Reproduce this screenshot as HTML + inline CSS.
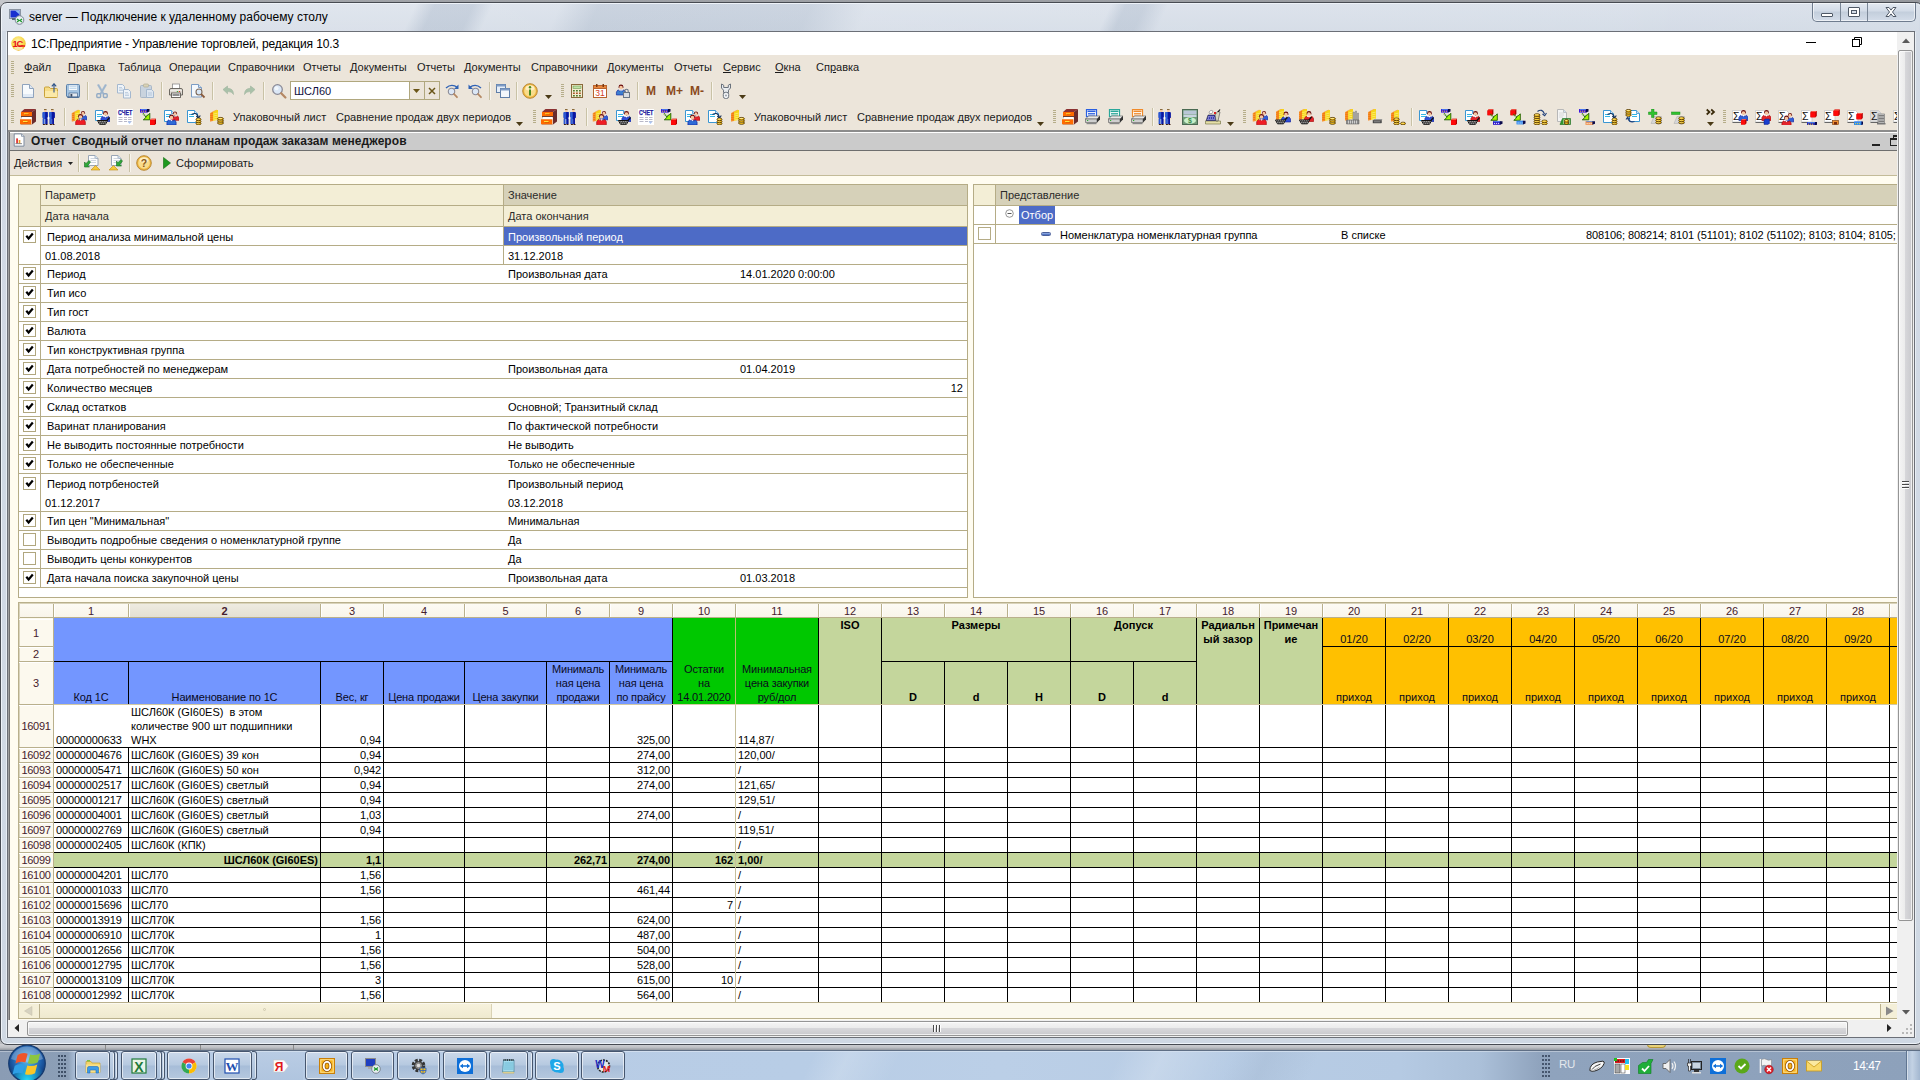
<!DOCTYPE html>
<html lang="ru"><head><meta charset="utf-8"><title>server — Подключение к удаленному рабочему столу</title>
<style>
html,body{margin:0;padding:0;}
body{width:1920px;height:1080px;overflow:hidden;position:relative;background:#b9bbbf;font-family:"Liberation Sans",sans-serif;font-size:11px;color:#000;}
div{position:absolute;box-sizing:border-box;white-space:nowrap;}
svg{position:absolute;overflow:visible;}
.t{line-height:13px;height:13px;}
.m{font-size:11px;line-height:13px;color:#1a1a1a;}
.u{text-decoration:underline;}
.c{text-align:center;}
.r{text-align:right;}
.b{font-weight:bold;}
</style></head>
<body>
<div style="left:0px;top:0px;width:1920px;height:4px;background:linear-gradient(90deg,#c6c8cc 0px,#a2a5aa 160px,#96999e 100%);"></div>
<div style="left:0px;top:2px;width:1923px;height:1043px;background:linear-gradient(180deg,#d9e0ea 0px,#d2dae5 30px,#cfd8e3 100%);border:1px solid #474b52;border-radius:7px 7px 7px 7px;box-shadow:inset 0 0 0 1px #eef3f9;"></div>
<div style="left:1px;top:4px;width:1918px;height:27px;background:linear-gradient(115deg,rgba(255,255,255,.18) 0%,rgba(255,255,255,.18) 21.500%,rgba(120,140,165,.16) 22.500%,rgba(120,140,165,.16) 24.500%,rgba(255,255,255,.15) 25.500%,rgba(255,255,255,.12) 29%,rgba(120,140,165,.15) 31%,rgba(120,140,165,.13) 42%,rgba(255,255,255,.16) 45%,rgba(255,255,255,.14) 57.500%,rgba(120,140,165,.16) 58.300%,rgba(120,140,165,.16) 59.300%,rgba(255,255,255,.1) 60.500%,rgba(255,255,255,.08) 84%,rgba(255,255,255,.04) 87%,rgba(255,255,255,.06) 100%);"></div>
<svg style="left:9px;top:9px" width="16" height="16" viewBox="0 0 16 16"><rect x="0.5" y="0.5" width="11" height="9" fill="#d8dde4" stroke="#8a94a2"/><rect x="1.500" y="1.500" width="9" height="7" fill="#1a2fd0"/><path d="M6 1.500h4.500v4z" fill="#8fb8f0"/><rect x="3" y="9" width="5" height="2" fill="#5a6a80"/><circle cx="10.5" cy="11" r="4.3" fill="#e9eef2" stroke="#7b8794"/><path d="M8 10l2 1.5-2 1.5M13 10l-2 1.5 2 1.5" stroke="#1f9a2e" stroke-width="1.2" fill="none"/></svg>
<div class="t" style="left:29px;top:10px;font-size:12px;line-height:14px;height:14px;">server — Подключение к удаленному рабочему столу</div>
<div style="left:1812px;top:3px;width:104px;height:19px;border:1px solid #6f7c8e;border-top:none;border-radius:0 0 5px 5px;background:linear-gradient(180deg,#e3e9f1,#d2dbe7 45%,#c3cedc 50%,#d4dde9);box-shadow:inset 0 0 0 1px rgba(255,255,255,.6);"></div>
<div style="left:1840px;top:3px;width:1px;height:18px;background:#7a8797;"></div>
<div style="left:1867px;top:3px;width:1px;height:18px;background:#7a8797;"></div>
<div style="left:1821px;top:13px;width:12px;height:4px;background:#fff;border:1px solid #4e5866;border-radius:1px;"></div>
<div style="left:1848px;top:7px;width:12px;height:10px;background:#fff;border:1px solid #4e5866;border-radius:1px;"></div>
<div style="left:1851px;top:10px;width:6px;height:4px;background:#d5dde8;border:1px solid #4e5866;"></div>
<svg style="left:1885px;top:7px" width="12" height="10" viewBox="0 0 12 10"><path d="M1 0.5h3l2 2.6 2-2.6h3l-3.5 4.5 3.5 4.5h-3l-2-2.6-2 2.6h-3l3.5-4.5z" fill="#fff" stroke="#4e5866" stroke-width="1"/></svg>
<div style="left:7px;top:31px;width:1908px;height:1007px;background:#fff;border:1px solid #6b6f77;"></div>
<div style="left:1915px;top:32px;width:1px;height:1006px;background:#e8eef4;"></div>
<div style="left:6px;top:32px;width:1px;height:1006px;background:#e8eef4;"></div>
<div style="left:8px;top:32px;width:1890px;height:23px;background:#fff;"></div>
<div style="left:8px;top:55px;width:1890px;height:965px;background:#ece5da;"></div>
<svg style="left:10.5px;top:35.5px;overflow:hidden" width="15" height="15" viewBox="0 0 16 16"><defs><radialGradient id="g1c" cx="45%" cy="35%" r="70%"><stop offset="0" stop-color="#fff6b0"/><stop offset=".6" stop-color="#f8d84a"/><stop offset="1" stop-color="#eeb020"/></radialGradient></defs><circle cx="8" cy="8" r="7.700" fill="url(#g1c)"/><ellipse cx="8" cy="13" rx="4.500" ry="2" fill="#fff" opacity=".55"/><text x="6.800" y="11.200" font-size="10" font-weight="bold" text-anchor="middle" fill="#e8121a" font-family="Liberation Sans,sans-serif" letter-spacing="-1.2">1С</text><path d="M8 10.700h7" stroke="#e8121a" stroke-width="1.500"/></svg>
<div class="t" style="left:31px;top:37px;font-size:12px;line-height:14px;height:14px;letter-spacing:-.13px;">1С:Предприятие - Управление торговлей, редакция 10.3</div>
<div style="left:1806px;top:42px;width:10px;height:1px;background:#000;"></div>
<svg style="left:1851px;top:36px" width="12" height="12" viewBox="0 0 12 12"><path d="M3.500 3V1.500h7v7H9" fill="none" stroke="#000"/><rect x="1.500" y="3.500" width="7" height="7" fill="#fff" stroke="#000"/></svg>
<div style="left:11px;top:61px;width:3px;height:1px;background:#b5ad8a;"></div><div style="left:11px;top:63px;width:3px;height:1px;background:#b5ad8a;"></div><div style="left:11px;top:65px;width:3px;height:1px;background:#b5ad8a;"></div><div style="left:11px;top:67px;width:3px;height:1px;background:#b5ad8a;"></div><div style="left:11px;top:69px;width:3px;height:1px;background:#b5ad8a;"></div><div style="left:11px;top:71px;width:3px;height:1px;background:#b5ad8a;"></div><div style="left:11px;top:73px;width:3px;height:1px;background:#b5ad8a;"></div>
<div class="t m" style="left:24px;top:61px;"><span class="u">Ф</span>айл</div>
<div class="t m" style="left:68px;top:61px;"><span class="u">П</span>равка</div>
<div class="t m" style="left:118px;top:61px;">Таблица</div>
<div class="t m" style="left:169px;top:61px;">Операции</div>
<div class="t m" style="left:228px;top:61px;">Справочники</div>
<div class="t m" style="left:303px;top:61px;">Отчеты</div>
<div class="t m" style="left:350px;top:61px;">Документы</div>
<div class="t m" style="left:417px;top:61px;">Отчеты</div>
<div class="t m" style="left:464px;top:61px;">Документы</div>
<div class="t m" style="left:531px;top:61px;">Справочники</div>
<div class="t m" style="left:607px;top:61px;">Документы</div>
<div class="t m" style="left:674px;top:61px;">Отчеты</div>
<div class="t m" style="left:723px;top:61px;"><span class="u">С</span>ервис</div>
<div class="t m" style="left:775px;top:61px;"><span class="u">О</span>кна</div>
<div class="t m" style="left:816px;top:61px;">Сп<span class="u">р</span>авка</div>
<div style="left:11px;top:84px;width:3px;height:1px;background:#b5ad8a;"></div><div style="left:11px;top:86px;width:3px;height:1px;background:#b5ad8a;"></div><div style="left:11px;top:88px;width:3px;height:1px;background:#b5ad8a;"></div><div style="left:11px;top:90px;width:3px;height:1px;background:#b5ad8a;"></div><div style="left:11px;top:92px;width:3px;height:1px;background:#b5ad8a;"></div><div style="left:11px;top:94px;width:3px;height:1px;background:#b5ad8a;"></div><div style="left:11px;top:96px;width:3px;height:1px;background:#b5ad8a;"></div>
<svg style="left:20px;top:83px;overflow:hidden" width="16" height="16" viewBox="0 0 16 16"><path d="M2.5 1.5h7l4 4v9h-11z" fill="#f7fafd" stroke="#8fa3bd"/><path d="M9.5 1.5v4h4" fill="#dfe8f3" stroke="#8fa3bd"/><path d="M3 11h10v3h-10z" fill="#dbe6f3" opacity=".8"/></svg>
<svg style="left:43px;top:83px;overflow:hidden" width="16" height="16" viewBox="0 0 16 16"><path d="M1.500 5q0-1 1-1h3.500l1.500 1.500h6q1 0 1 1v7q0 1-1 1h-11q-1 0-1-1z" fill="#f7dc86" stroke="#c9a23a"/><path d="M2 8h12.500v5.500q0 .5-.5.500h-11.500q-.5 0-.5-.5z" fill="#fbe9a8"/><path d="M11 9.500v-8.500M8.800 3.300l2.200-2.600 2.200 2.600" fill="none" stroke="#2f5488" stroke-width="1.100"/></svg>
<svg style="left:65px;top:83px;overflow:hidden" width="16" height="16" viewBox="0 0 16 16"><path d="M1.500 2.500q0-1 1-1h11q1 0 1 1v11q0 1-1 1h-10.500l-1.500-1.500z" fill="#a6c6e4" stroke="#5a7fa8"/><rect x="3.500" y="2" width="9" height="5.500" fill="#f6fafd" stroke="#8fb0d0" stroke-width=".6"/><path d="M4.500 3.700h7M4.500 5.400h7" stroke="#b4d0e8" stroke-width=".9"/><rect x="4" y="10" width="8.500" height="4.500" fill="#e4e9ef" stroke="#4a6a92" stroke-width=".7"/><rect x="5.500" y="11" width="1.800" height="2.800" fill="#3a4a62"/><path d="M2 14h12" stroke="#3f5f88" stroke-width="1"/></svg>
<svg style="left:94px;top:83px;overflow:hidden" width="16" height="16" viewBox="0 0 16 16"><path d="M4 1.500l5.500 9.500M12 1.500l-5.500 9.500" stroke="#a9bdd2" stroke-width="2.300" fill="none"/><path d="M4 1.500l5.500 9.500M12 1.500l-5.500 9.500" stroke="#8fa8c2" stroke-width=".5" fill="none"/><rect x="2.800" y="10.800" width="3.800" height="3.700" rx="1" fill="none" stroke="#93abc5" stroke-width="1.400"/><rect x="9.400" y="10.800" width="3.800" height="3.700" rx="1" fill="none" stroke="#93abc5" stroke-width="1.400"/></svg>
<svg style="left:116px;top:83px;overflow:hidden" width="16" height="16" viewBox="0 0 16 16"><path d="M1.500 1.500h5l2 2v6.500h-7z" fill="#eef3f8" stroke="#a4b8cf"/><path d="M3 4.500h3M3 6h4M3 7.500h4" stroke="#b5c6da" stroke-width=".8"/><path d="M7.500 6.500h5l2 2v6.500h-7z" fill="#eef3f8" stroke="#a4b8cf"/><path d="M9 9.500h3M9 11h4M9 12.500h4" stroke="#b5c6da" stroke-width=".8"/></svg>
<svg style="left:139px;top:83px;overflow:hidden" width="16" height="16" viewBox="0 0 16 16"><rect x="1.500" y="2.500" width="11" height="12" rx="1" fill="#c9d3de" stroke="#a9b7c7"/><rect x="4.500" y="1" width="5" height="3" rx="1" fill="#d9d3b8" stroke="#b3ad92" stroke-width=".7"/><path d="M7.500 6.500h5l2 2v6h-7z" fill="#dde6f0" stroke="#a4b8cf"/><path d="M9 10h4M9 12h4" stroke="#b5c6da"/></svg>
<svg style="left:168px;top:83px;overflow:hidden" width="16" height="16" viewBox="0 0 16 16"><rect x="4.500" y="1" width="7" height="5.500" fill="#fff" stroke="#8a8a8a" stroke-width=".8"/><path d="M1.500 7q0-1.500 1.500-1.500h10q1.500 0 1.500 1.500v5h-13z" fill="#dedad3" stroke="#5f5b55" stroke-width=".9"/><path d="M2 7.300h12" stroke="#f4f2ee" stroke-width=".8"/><rect x="3.500" y="10" width="9" height="4.500" fill="#fbfbfb" stroke="#5f5b55" stroke-width=".9"/><path d="M4.500 12h7" stroke="#3a3a3a" stroke-width="1.100"/><rect x="10.800" y="8" width="1.300" height="1" fill="#e03a1e"/><rect x="8.800" y="8" width="1.300" height="1" fill="#3da53d"/></svg>
<svg style="left:190px;top:83px;overflow:hidden" width="16" height="16" viewBox="0 0 16 16"><path d="M1.500 1.500h7l3 3v9.500h-10z" fill="#f4f8fc" stroke="#7b9cc4"/><path d="M8.500 1.500v3h3" fill="#d6e3f1" stroke="#7b9cc4"/><circle cx="9" cy="9" r="3" fill="#d9e8f7" stroke="#7d6a5a" stroke-width="1.100"/><path d="M11.200 11.200l3.300 3.300" stroke="#8a5a3a" stroke-width="1.800"/></svg>
<svg style="left:220px;top:83px;overflow:hidden" width="16" height="16" viewBox="0 0 16 16"><path d="M3 6.500l4.500-3.500v2.300q6 0 6 6.200-1.500-3.200-6-3v2.300z" fill="#a9c1a9" stroke="#9db49d" stroke-width=".6"/></svg>
<svg style="left:242px;top:83px;overflow:hidden" width="16" height="16" viewBox="0 0 16 16"><path d="M13 6.500l-4.500-3.500v2.300q-6 0-6 6.200 1.500-3.200 6-3v2.300z" fill="#a9c1a9" stroke="#9db49d" stroke-width=".6"/></svg>
<svg style="left:271px;top:83px;overflow:hidden" width="16" height="16" viewBox="0 0 16 16"><circle cx="6.500" cy="6.500" r="4.800" fill="#dbe7f6" stroke="#8a8a96" stroke-width="1.300"/><circle cx="5.500" cy="5.300" r="2" fill="#f4f8fd" opacity=".9"/><path d="M10.200 10.200l4.200 4.300" stroke="#b58863" stroke-width="2.200" stroke-linecap="round"/></svg>
<svg style="left:444px;top:83px;overflow:hidden" width="16" height="16" viewBox="0 0 16 16"><path d="M2 5q5.500-5 11.500-.5" fill="none" stroke="#2f62b5" stroke-width="1.400"/><path d="M14.500 1.500v4.500h-4.500z" fill="#2f62b5"/><circle cx="7.500" cy="8.500" r="3.200" fill="#dbe7f6" stroke="#8a8a96" stroke-width="1.100"/><path d="M10 11l3 3.200" stroke="#b58863" stroke-width="1.800" stroke-linecap="round"/></svg>
<svg style="left:467px;top:83px;overflow:hidden" width="16" height="16" viewBox="0 0 16 16"><path d="M14 5q-5.500-5-11.500-.5" fill="none" stroke="#2f62b5" stroke-width="1.400"/><path d="M1.500 1.500v4.500h4.500z" fill="#2f62b5"/><circle cx="8.500" cy="8.500" r="3.200" fill="#dbe7f6" stroke="#8a8a96" stroke-width="1.100"/><path d="M11 11l3 3.200" stroke="#b58863" stroke-width="1.800" stroke-linecap="round"/></svg>
<svg style="left:495px;top:83px;overflow:hidden" width="16" height="16" viewBox="0 0 16 16"><rect x="1.500" y="1.500" width="9" height="8" fill="#e6eef8" stroke="#5f7ea8"/><rect x="1.500" y="1.500" width="9" height="2" fill="#7f9cc6"/><rect x="5.500" y="5.500" width="9" height="9" fill="#f2f6fb" stroke="#5f7ea8"/><rect x="5.500" y="5.500" width="9" height="2" fill="#7f9cc6"/></svg>
<svg style="left:522px;top:83px;overflow:hidden" width="16" height="16" viewBox="0 0 16 16"><circle cx="8" cy="8" r="7.300" fill="#f0b63c" stroke="#b98a3a"/><circle cx="8" cy="8" r="5.800" fill="#f9dc8b"/><ellipse cx="8" cy="5" rx="4.500" ry="2.800" fill="#fff3cf" opacity=".8"/><rect x="7" y="6.500" width="2" height="6" fill="#4b8a1f"/><circle cx="8" cy="4.300" r="1.200" fill="#4b8a1f"/></svg>
<svg style="left:569px;top:83px;overflow:hidden" width="16" height="16" viewBox="0 0 16 16"><rect x="2.500" y="1.500" width="11" height="13" fill="#f4ecd2" stroke="#8a6a3a"/><rect x="4" y="3" width="8" height="2.500" fill="#bfe3a8" stroke="#5a8a3a" stroke-width=".5"/><rect x="4" y="7.0" width="1.800" height="1.500" fill="#4d7a2a"/><rect x="4" y="9.5" width="1.800" height="1.500" fill="#a8572a"/><rect x="4" y="12.0" width="1.800" height="1.500" fill="#4d7a2a"/><rect x="7" y="7.0" width="1.800" height="1.500" fill="#4d7a2a"/><rect x="7" y="9.5" width="1.800" height="1.500" fill="#a8572a"/><rect x="7" y="12.0" width="1.800" height="1.500" fill="#4d7a2a"/><rect x="10" y="7.0" width="1.800" height="1.500" fill="#4d7a2a"/><rect x="10" y="9.5" width="1.800" height="1.500" fill="#a8572a"/><rect x="10" y="12.0" width="1.800" height="1.500" fill="#4d7a2a"/></svg>
<svg style="left:592px;top:83px;overflow:hidden" width="16" height="16" viewBox="0 0 16 16"><rect x="1.500" y="2.500" width="13" height="12" fill="#fff" stroke="#b8632e"/><rect x="1.500" y="2.500" width="13" height="3" fill="#e8873f" stroke="#b8632e"/><rect x="4" y="1" width="1.500" height="3" fill="#7a3b12"/><rect x="10.500" y="1" width="1.500" height="3" fill="#7a3b12"/><text x="8" y="13.300" font-size="8.500" text-anchor="middle" fill="#d43a1a" font-family="Liberation Sans,sans-serif">31</text></svg>
<svg style="left:615px;top:83px;overflow:hidden" width="16" height="16" viewBox="0 0 16 16"><path d="M1.4000000000000004 12.0v-3.0l1.6-2.2l1.5 1.2l1.5-1.2l1.5 1.2l1.5-1.2l1.6 2.2v3.0z" fill="#3d7fd0" stroke="#0a1a9a" stroke-width=".6"/><path d="M4.8 6.6l1.2 1.6l1.2-1.6z" fill="#fff"/><circle cx="6" cy="4.3" r="2.0" fill="#f7c6a0"/><path d="M3.6 5.0v-1.2a2.4 2.2 0 0 1 4.8 0v1.2l-.8-.3v-1.2q-2.0 -1.500 -3.2 0v1.2z" fill="#6a0c0c"/><rect x="8.500" y="9.500" width="6" height="5" fill="#d9dde3" stroke="#6a7686"/><path d="M9.800 9.500v-1.500a1.700 1.700 0 0 1 3.400 0v1.500" fill="none" stroke="#6a7686" stroke-width="1.100"/></svg>
<svg style="left:718px;top:83px;overflow:hidden" width="16" height="16" viewBox="0 0 16 16"><path d="M3.500 1v4l2 2.200v2.300h5v-2.300l2-2.200v-4l-2.200 1.200v2.300h-4.600v-2.300z" fill="#e9ecef" stroke="#6a727c" stroke-width="1"/><rect x="5.300" y="9.300" width="5.400" height="6.200" rx="2.200" fill="#f2f4f6" stroke="#6a727c"/><circle cx="8" cy="12.500" r="1" fill="#9aa2ac"/></svg>
<div style="left:87px;top:82px;width:1px;height:18px;background:#c9c2a6;"></div><div style="left:88px;top:82px;width:1px;height:18px;background:#f8f5ec;"></div>
<div style="left:161px;top:82px;width:1px;height:18px;background:#c9c2a6;"></div><div style="left:162px;top:82px;width:1px;height:18px;background:#f8f5ec;"></div>
<div style="left:212px;top:82px;width:1px;height:18px;background:#c9c2a6;"></div><div style="left:213px;top:82px;width:1px;height:18px;background:#f8f5ec;"></div>
<div style="left:263px;top:82px;width:1px;height:18px;background:#c9c2a6;"></div><div style="left:264px;top:82px;width:1px;height:18px;background:#f8f5ec;"></div>
<div style="left:489px;top:82px;width:1px;height:18px;background:#c9c2a6;"></div><div style="left:490px;top:82px;width:1px;height:18px;background:#f8f5ec;"></div>
<div style="left:516px;top:82px;width:1px;height:18px;background:#c9c2a6;"></div><div style="left:517px;top:82px;width:1px;height:18px;background:#f8f5ec;"></div>
<div style="left:637px;top:82px;width:1px;height:18px;background:#c9c2a6;"></div><div style="left:638px;top:82px;width:1px;height:18px;background:#f8f5ec;"></div>
<div style="left:711px;top:82px;width:1px;height:18px;background:#c9c2a6;"></div><div style="left:712px;top:82px;width:1px;height:18px;background:#f8f5ec;"></div>
<div style="left:290px;top:81px;width:150px;height:19px;background:#fff;border:1px solid #b0a77e;"></div>
<div style="left:409px;top:82px;width:1px;height:17px;background:#b0a77e;"></div>
<div style="left:424px;top:82px;width:1px;height:17px;background:#b0a77e;"></div>
<div style="left:410px;top:82px;width:14px;height:17px;background:#ece5da;"></div>
<div style="left:425px;top:82px;width:14px;height:17px;background:#ece5da;"></div>
<svg style="left:413px;top:89px" width="7" height="4" viewBox="0 0 7 4"><path d="M0 0h7l-3.500 4z" fill="#6a5518"/></svg>
<svg style="left:428px;top:87px" width="8" height="8" viewBox="0 0 8 8"><path d="M1 1l6 6M7 1l-6 6" stroke="#6a5518" stroke-width="1.500"/></svg>
<div class="t" style="left:294px;top:85px;color:#101040;">ШСЛ60</div>
<svg style="left:545px;top:95px" width="7" height="4" viewBox="0 0 7 4"><path d="M0 0h7l-3.500 4z" fill="#4a3a16"/></svg>
<div style="left:561px;top:84px;width:3px;height:1px;background:#b5ad8a;"></div><div style="left:561px;top:86px;width:3px;height:1px;background:#b5ad8a;"></div><div style="left:561px;top:88px;width:3px;height:1px;background:#b5ad8a;"></div><div style="left:561px;top:90px;width:3px;height:1px;background:#b5ad8a;"></div><div style="left:561px;top:92px;width:3px;height:1px;background:#b5ad8a;"></div><div style="left:561px;top:94px;width:3px;height:1px;background:#b5ad8a;"></div><div style="left:561px;top:96px;width:3px;height:1px;background:#b5ad8a;"></div>
<svg style="left:739px;top:95px" width="7" height="4" viewBox="0 0 7 4"><path d="M0 0h7l-3.500 4z" fill="#4a3a16"/></svg>
<div class="t" style="left:646px;top:84px;font-weight:bold;font-size:12px;line-height:14px;height:14px;color:#8a4a1c;">M</div>
<div class="t" style="left:666px;top:84px;font-weight:bold;font-size:12px;line-height:14px;height:14px;color:#8a4a1c;">M+</div>
<div class="t" style="left:690px;top:84px;font-weight:bold;font-size:12px;line-height:14px;height:14px;color:#8a4a1c;">M-</div>
<div style="left:11px;top:110px;width:3px;height:1px;background:#b5ad8a;"></div><div style="left:11px;top:112px;width:3px;height:1px;background:#b5ad8a;"></div><div style="left:11px;top:114px;width:3px;height:1px;background:#b5ad8a;"></div><div style="left:11px;top:116px;width:3px;height:1px;background:#b5ad8a;"></div><div style="left:11px;top:118px;width:3px;height:1px;background:#b5ad8a;"></div><div style="left:11px;top:120px;width:3px;height:1px;background:#b5ad8a;"></div><div style="left:11px;top:122px;width:3px;height:1px;background:#b5ad8a;"></div>
<svg style="left:20px;top:109px;overflow:hidden" width="16" height="16" viewBox="0 0 16 16"><path d="M1 3l3.500-3h11.500l-4 3z" fill="#8c3030"/><path d="M12 3l4-3v12.500l-4 3z" fill="#6a2c2c"/><rect x="1" y="3" width="11" height="4.200" fill="#ff6a00"/><rect x="1" y="7.200" width="11" height="1" fill="#4a1a10"/><rect x="2" y="8" width="9.500" height="2.200" fill="#fff"/><rect x="0" y="10.300" width="11.300" height="4.700" fill="#ff6a00"/><path d="M0 15h11.300l.7.500h-11z" fill="#b84a00"/><rect x="4" y="4.300" width="4.500" height="1.100" fill="#ffe23a"/><rect x="4.500" y="5.400" width="4.500" height=".5" fill="#c04a00"/><rect x="3" y="12" width="4.500" height="1.100" fill="#ffe23a"/><rect x="3.500" y="13.100" width="4.500" height=".5" fill="#c04a00"/></svg>
<svg style="left:42px;top:109px;overflow:hidden" width="16" height="16" viewBox="0 0 16 16"><path d="M2 0h2.600v1.200h-2.600z" fill="#8a6a3a"/><rect x="2.2" y="1" width="2.300" height="1.900" fill="#f7c6a0"/><path d="M0.3 4q0-1 1-1h3.600q1 0 1 1v5h-.9v6h-1.900v-5h-.6v5h-1.900v-6h-.300z" fill="#2a55d0"/><path d="M3.2 3h2.400v12h-1.900v-5h-.500z" fill="#0a16a0"/><rect x="0.9" y="15" width="2" height="1" fill="#3a1a10"/><rect x="3.5" y="15" width="2" height="1" fill="#3a1a10"/><rect x="-0.1" y="8.800" width=".9" height="1" fill="#f7c6a0"/><path d="M9 0h2.600v1.200h-2.600z" fill="#8a6a3a"/><rect x="9.2" y="1" width="2.300" height="1.900" fill="#f7c6a0"/><path d="M7.3 4q0-1 1-1h3.600q1 0 1 1v5h-.9v6h-1.900v-5h-.6v5h-1.900v-6h-.300z" fill="#0a16a0"/><path d="M7.3 3h2.400v12h-1.900v-5h-.500z" fill="#2f60d8"/><rect x="7.9" y="15" width="2" height="1" fill="#3a1a10"/><rect x="10.5" y="15" width="2" height="1" fill="#3a1a10"/><rect x="12.5" y="8.800" width=".9" height="1" fill="#f7c6a0"/><path d="M6.500 7l.6 1.400 1.400.6-1.400.6-.6 1.400-.6-1.400-1.400-.6 1.400-.6z" fill="#fff"/></svg>
<div style="left:64px;top:108px;width:1px;height:18px;background:#c9c2a6;"></div><div style="left:65px;top:108px;width:1px;height:18px;background:#f8f5ec;"></div>
<svg style="left:71px;top:109px;overflow:hidden" width="16" height="16" viewBox="0 0 16 16"><path d="M0.8 4.5l3-1.800v9.300l-3 .5z" fill="#f27a10"/><path d="M3.8 2.7l3.500-1.700h1.500v9.800l-5 1.200z" fill="#f6d516"/><path d="M0.8 4.5l3-1.800 3.500-1.700" fill="none" stroke="#f9a030" stroke-width=".6"/><path d="M1.1 5.8l2.500-.5" stroke="#ffc070" stroke-width=".7" stroke-dasharray=".8 .6"/><path d="M4.1 5.1l4.400-1" stroke="#fff7a0" stroke-width=".6"/><path d="M1.1 7.8l2.500-.5" stroke="#ffc070" stroke-width=".7" stroke-dasharray=".8 .6"/><path d="M4.1 7.1l4.400-1" stroke="#fff7a0" stroke-width=".6"/><path d="M1.1 9.8l2.500-.5" stroke="#ffc070" stroke-width=".7" stroke-dasharray=".8 .6"/><path d="M4.1 9.100000000000001l4.400-1" stroke="#fff7a0" stroke-width=".6"/><path d="M1.1 11.8l2.500-.5" stroke="#ffc070" stroke-width=".7" stroke-dasharray=".8 .6"/><path d="M4.1 11.100000000000001l4.400-1" stroke="#fff7a0" stroke-width=".6"/><path d="M8.09 10.85v-2.55l1.36-1.87l1.275 1.02l1.275-1.02l1.275 1.02l1.275-1.02l1.36 1.87v2.55z" fill="#2f5fd8" stroke="#0a1a9a" stroke-width=".6"/><path d="M10.98 6.26l1.02 1.36l1.02-1.36z" fill="#fff"/><circle cx="12" cy="4.305" r="1.7" fill="#f7c6a0"/><path d="M9.9 4.9v-1.02a2.1 1.9 0 0 1 4.2 0v1.02l-.8-.3v-1.02q-1.7 -1.500 -2.5999999999999996 0v1.02z" fill="#6a0c0c"/><path d="M4.67 15.850000000000001v-3.1500000000000004l1.6800000000000002-2.3100000000000005l1.5750000000000002 1.26l1.5750000000000002-1.26l1.5750000000000002 1.26l1.5750000000000002-1.26l1.6800000000000002 2.3100000000000005v3.1500000000000004z" fill="#f01c24" stroke="#a00000" stroke-width=".6"/><path d="M8.24 10.18l1.26 1.6800000000000002l1.26-1.6800000000000002z" fill="#fff"/><circle cx="9.5" cy="7.765" r="2.1" fill="#f7c6a0"/><path d="M7.0 8.5v-1.26a2.5 2.3000000000000003 0 0 1 5.0 0v1.26l-.8-.3v-1.26q-2.1 -1.500 -3.4000000000000004 0v1.26z" fill="#6a0c0c"/></svg>
<svg style="left:94px;top:109px;overflow:hidden" width="16" height="16" viewBox="0 0 16 16"><path d="M1.5 1.5h7l3 3v7h-10z" fill="#fff" stroke="#3a96d2" stroke-width="1"/><path d="M8.5 1.5v3h3" fill="#cfe1f5" stroke="#3a96d2" stroke-width=".8"/><rect x="3" y="5" width="5" height="1" fill="#35b6e6"/><rect x="3" y="7" width="5" height="1" fill="#35b6e6"/><path d="M6.9 12.5v-3.0l1.6-2.2l1.5 1.2l1.5-1.2l1.5 1.2l1.5-1.2l1.6 2.2v3.0z" fill="#2f4fd6" stroke="#0a1a9a" stroke-width=".6"/><path d="M10.3 7.1l1.2 1.6l1.2-1.6z" fill="#fff"/><circle cx="11.5" cy="4.8" r="2.0" fill="#f7c6a0"/><path d="M9.1 5.5v-1.2a2.4 2.2 0 0 1 4.8 0v1.2l-.8-.3v-1.2q-2.0 -1.500 -3.2 0v1.2z" fill="#6a0c0c"/><path d="M3.5 11.5h10l-2 3.800h-6z" fill="#f4f4f4" stroke="#111" stroke-width="1"/><path d="M5.5 11.5l1.300 3.800M7.5 11.5l.7 3.800M9.5 11.5l-.7 3.800M11.5 11.5l-1.300 3.800M4.3 13.2h8.4" stroke="#111" stroke-width=".7"/><path d="M13.0 11.5l2.500-3" stroke="#111" stroke-width="1.300"/></svg>
<svg style="left:117px;top:109px;overflow:hidden" width="16" height="16" viewBox="0 0 16 16"><rect x="0" y="0" width="16" height="16" fill="#fff"/><text x="1" y="5.600" font-size="6.800" font-weight="bold" fill="#1c1ca0" stroke="#1c1ca0" stroke-width=".25" font-family="Liberation Sans,sans-serif" textLength="14.200" lengthAdjust="spacingAndGlyphs">СЧЕТ</text><rect x="1.5" y="8" width="4" height="1" fill="#b8b8c8"/><rect x="1.5" y="10" width="4" height="1" fill="#b8b8c8"/><rect x="1.5" y="12" width="4" height="1" fill="#b8b8c8"/><rect x="7" y="8" width="3" height="1" fill="#b8b8c8"/><rect x="7" y="10" width="3" height="1" fill="#b8b8c8"/><rect x="7" y="12" width="3" height="1" fill="#b8b8c8"/><rect x="11" y="8" width="3.5" height="1" fill="#b8b8c8"/><rect x="11" y="10" width="3.5" height="1" fill="#b8b8c8"/><rect x="11" y="12" width="3.5" height="1" fill="#b8b8c8"/><path d="M10.500 12.500h4l-2 2.500z" fill="#a9c4f2"/></svg>
<svg style="left:140px;top:109px;overflow:hidden" width="16" height="16" viewBox="0 0 16 16"><rect x="0" y="0" width="7.5" height="3.600" fill="#3a12e0"/><rect x="0.8" y="0" width="6.7" height=".9" fill="#4a8af0" opacity=".9"/><path d="M6.9 0h2.600v2.600l-2.600 1z" fill="#0a0a4a"/><rect x="1.1" y="1.7" width="1" height="1" fill="#ffe020"/><rect x="3.1" y="1.7" width="1" height="1" fill="#ffe020"/><rect x="5.1" y="1.7" width="1" height="1" fill="#ffe020"/><path d="M3 4.5l3.200 3.600" stroke="#2a7a00" stroke-width="1.500" stroke-dasharray="1 .7"/><path d="M9.8 4.3v6.500h-6.500l2.300-2 1.200-2.300 1.500-.600z" fill="#a6f500" stroke="#1c5a00" stroke-width=".9" stroke-linejoin="round"/><path d="M10 11.100000000000001l1.300-1.300h4.8v4.8l-1.300 1.300h-4.8z" fill="#b00000"/><path d="M10 11.100000000000001l1.300-1.300h4.8l-1.300 1.300z" fill="#ff5a4a"/><rect x="10" y="11.100000000000001" width="4.8" height="4.8" fill="#ff0a0a"/></svg>
<svg style="left:163px;top:109px;overflow:hidden" width="16" height="16" viewBox="0 0 16 16"><path d="M1.5 1.5h7l3 3v8h-10z" fill="#fff" stroke="#3a96d2" stroke-width="1"/><path d="M8.5 1.5v3h3" fill="#cfe1f5" stroke="#3a96d2" stroke-width=".8"/><rect x="3" y="5" width="5" height="1" fill="#35b6e6"/><rect x="3" y="7" width="5" height="1" fill="#35b6e6"/><path d="M8.09 11.35v-2.55l1.36-1.87l1.275 1.02l1.275-1.02l1.275 1.02l1.275-1.02l1.36 1.87v2.55z" fill="#e3242b" stroke="#a00000" stroke-width=".6"/><path d="M10.98 6.76l1.02 1.36l1.02-1.36z" fill="#fff"/><circle cx="12" cy="4.805" r="1.7" fill="#f7c6a0"/><path d="M9.9 5.4v-1.02a2.1 1.9 0 0 1 4.2 0v1.02l-.8-.3v-1.02q-1.7 -1.500 -2.5999999999999996 0v1.02z" fill="#6a0c0c"/><path d="M3.9000000000000004 16.0v-3.0l1.6-2.2l1.5 1.2l1.5-1.2l1.5 1.2l1.5-1.2l1.6 2.2v3.0z" fill="#2f6bd6" stroke="#0a1a9a" stroke-width=".6"/><path d="M7.3 10.6l1.2 1.6l1.2-1.6z" fill="#fff"/><circle cx="8.5" cy="8.3" r="2.0" fill="#f7c6a0"/><path d="M6.1 9.0v-1.2a2.4 2.2 0 0 1 4.8 0v1.2l-.8-.3v-1.2q-2.0 -1.500 -3.2 0v1.2z" fill="#6a0c0c"/></svg>
<svg style="left:186px;top:109px;overflow:hidden" width="16" height="16" viewBox="0 0 16 16"><path d="M1.5 1.5h7l3 3v9h-10z" fill="#fff" stroke="#3a96d2" stroke-width="1"/><path d="M8.5 1.5v3h3" fill="#cfe1f5" stroke="#3a96d2" stroke-width=".8"/><rect x="3" y="5" width="5" height="1" fill="#35b6e6"/><rect x="3" y="7" width="5" height="1" fill="#35b6e6"/><path d="M5.500 5.500q5.500-3 7 3" fill="none" stroke="#14305a" stroke-width="1.100"/><path d="M10.300 7l2.200 2.200 1.800-2.700" fill="none" stroke="#14305a" stroke-width="1.100"/><ellipse cx="12.5" cy="14.6" rx="2.5" ry="1.350" fill="#f2b705" stroke="#4a3000" stroke-width=".8"/><path d="M11.0 14.299999999999999h2.5" stroke="#fff3a8" stroke-width=".8"/><ellipse cx="12.5" cy="12.5" rx="2.5" ry="1.350" fill="#f2b705" stroke="#4a3000" stroke-width=".8"/><path d="M11.0 12.2h2.5" stroke="#fff3a8" stroke-width=".8"/><ellipse cx="12.5" cy="10.399999999999999" rx="2.5" ry="1.350" fill="#f2b705" stroke="#4a3000" stroke-width=".8"/><path d="M11.0 10.099999999999998h2.5" stroke="#fff3a8" stroke-width=".8"/></svg>
<svg style="left:209px;top:109px;overflow:hidden" width="16" height="16" viewBox="0 0 16 16"><path d="M1 4.5l3-1.800v9.300l-3 .5z" fill="#f27a10"/><path d="M4 2.7l3.500-1.700h1.500v9.800l-5 1.200z" fill="#f6d516"/><path d="M1 4.5l3-1.800 3.500-1.700" fill="none" stroke="#f9a030" stroke-width=".6"/><path d="M1.3 5.8l2.500-.5" stroke="#ffc070" stroke-width=".7" stroke-dasharray=".8 .6"/><path d="M4.3 5.1l4.400-1" stroke="#fff7a0" stroke-width=".6"/><path d="M1.3 7.8l2.500-.5" stroke="#ffc070" stroke-width=".7" stroke-dasharray=".8 .6"/><path d="M4.3 7.1l4.400-1" stroke="#fff7a0" stroke-width=".6"/><path d="M1.3 9.8l2.500-.5" stroke="#ffc070" stroke-width=".7" stroke-dasharray=".8 .6"/><path d="M4.3 9.100000000000001l4.400-1" stroke="#fff7a0" stroke-width=".6"/><path d="M1.3 11.8l2.500-.5" stroke="#ffc070" stroke-width=".7" stroke-dasharray=".8 .6"/><path d="M4.3 11.100000000000001l4.400-1" stroke="#fff7a0" stroke-width=".6"/><ellipse cx="11.5" cy="14.0" rx="3.0" ry="1.350" fill="#f2b705" stroke="#4a3000" stroke-width=".8"/><path d="M9.5 13.7h3.5" stroke="#fff3a8" stroke-width=".8"/><ellipse cx="11.5" cy="11.9" rx="3.0" ry="1.350" fill="#f2b705" stroke="#4a3000" stroke-width=".8"/><path d="M9.5 11.6h3.5" stroke="#fff3a8" stroke-width=".8"/><ellipse cx="11.5" cy="9.8" rx="3.0" ry="1.350" fill="#f2b705" stroke="#4a3000" stroke-width=".8"/><path d="M9.5 9.5h3.5" stroke="#fff3a8" stroke-width=".8"/></svg>
<div class="t" style="left:233px;top:111px;color:#1a1a1a;">Упаковочный лист</div>
<div class="t" style="left:336px;top:111px;color:#1a1a1a;">Сравнение продаж двух периодов</div>
<svg style="left:516px;top:122px" width="7" height="4" viewBox="0 0 7 4"><path d="M0 0h7l-3.500 4z" fill="#4a3a16"/></svg>
<div style="left:533px;top:110px;width:3px;height:1px;background:#b5ad8a;"></div><div style="left:533px;top:112px;width:3px;height:1px;background:#b5ad8a;"></div><div style="left:533px;top:114px;width:3px;height:1px;background:#b5ad8a;"></div><div style="left:533px;top:116px;width:3px;height:1px;background:#b5ad8a;"></div><div style="left:533px;top:118px;width:3px;height:1px;background:#b5ad8a;"></div><div style="left:533px;top:120px;width:3px;height:1px;background:#b5ad8a;"></div><div style="left:533px;top:122px;width:3px;height:1px;background:#b5ad8a;"></div>
<svg style="left:541px;top:109px;overflow:hidden" width="16" height="16" viewBox="0 0 16 16"><path d="M1 3l3.500-3h11.500l-4 3z" fill="#8c3030"/><path d="M12 3l4-3v12.500l-4 3z" fill="#6a2c2c"/><rect x="1" y="3" width="11" height="4.200" fill="#ff6a00"/><rect x="1" y="7.200" width="11" height="1" fill="#4a1a10"/><rect x="2" y="8" width="9.500" height="2.200" fill="#fff"/><rect x="0" y="10.300" width="11.300" height="4.700" fill="#ff6a00"/><path d="M0 15h11.300l.7.500h-11z" fill="#b84a00"/><rect x="4" y="4.300" width="4.500" height="1.100" fill="#ffe23a"/><rect x="4.500" y="5.400" width="4.500" height=".5" fill="#c04a00"/><rect x="3" y="12" width="4.500" height="1.100" fill="#ffe23a"/><rect x="3.500" y="13.100" width="4.500" height=".5" fill="#c04a00"/></svg>
<svg style="left:563px;top:109px;overflow:hidden" width="16" height="16" viewBox="0 0 16 16"><path d="M2 0h2.600v1.200h-2.600z" fill="#8a6a3a"/><rect x="2.2" y="1" width="2.300" height="1.900" fill="#f7c6a0"/><path d="M0.3 4q0-1 1-1h3.600q1 0 1 1v5h-.9v6h-1.900v-5h-.6v5h-1.900v-6h-.300z" fill="#2a55d0"/><path d="M3.2 3h2.400v12h-1.900v-5h-.500z" fill="#0a16a0"/><rect x="0.9" y="15" width="2" height="1" fill="#3a1a10"/><rect x="3.5" y="15" width="2" height="1" fill="#3a1a10"/><rect x="-0.1" y="8.800" width=".9" height="1" fill="#f7c6a0"/><path d="M9 0h2.600v1.200h-2.600z" fill="#8a6a3a"/><rect x="9.2" y="1" width="2.300" height="1.900" fill="#f7c6a0"/><path d="M7.3 4q0-1 1-1h3.600q1 0 1 1v5h-.9v6h-1.900v-5h-.6v5h-1.900v-6h-.300z" fill="#0a16a0"/><path d="M7.3 3h2.400v12h-1.900v-5h-.500z" fill="#2f60d8"/><rect x="7.9" y="15" width="2" height="1" fill="#3a1a10"/><rect x="10.5" y="15" width="2" height="1" fill="#3a1a10"/><rect x="12.5" y="8.800" width=".9" height="1" fill="#f7c6a0"/><path d="M6.500 7l.6 1.400 1.400.6-1.400.6-.6 1.400-.6-1.400-1.400-.6 1.400-.6z" fill="#fff"/></svg>
<div style="left:586px;top:108px;width:1px;height:18px;background:#c9c2a6;"></div><div style="left:587px;top:108px;width:1px;height:18px;background:#f8f5ec;"></div>
<svg style="left:592px;top:109px;overflow:hidden" width="16" height="16" viewBox="0 0 16 16"><path d="M0.8 4.5l3-1.800v9.300l-3 .5z" fill="#f27a10"/><path d="M3.8 2.7l3.500-1.700h1.500v9.800l-5 1.200z" fill="#f6d516"/><path d="M0.8 4.5l3-1.800 3.500-1.700" fill="none" stroke="#f9a030" stroke-width=".6"/><path d="M1.1 5.8l2.500-.5" stroke="#ffc070" stroke-width=".7" stroke-dasharray=".8 .6"/><path d="M4.1 5.1l4.400-1" stroke="#fff7a0" stroke-width=".6"/><path d="M1.1 7.8l2.500-.5" stroke="#ffc070" stroke-width=".7" stroke-dasharray=".8 .6"/><path d="M4.1 7.1l4.400-1" stroke="#fff7a0" stroke-width=".6"/><path d="M1.1 9.8l2.500-.5" stroke="#ffc070" stroke-width=".7" stroke-dasharray=".8 .6"/><path d="M4.1 9.100000000000001l4.400-1" stroke="#fff7a0" stroke-width=".6"/><path d="M1.1 11.8l2.500-.5" stroke="#ffc070" stroke-width=".7" stroke-dasharray=".8 .6"/><path d="M4.1 11.100000000000001l4.400-1" stroke="#fff7a0" stroke-width=".6"/><path d="M8.09 10.85v-2.55l1.36-1.87l1.275 1.02l1.275-1.02l1.275 1.02l1.275-1.02l1.36 1.87v2.55z" fill="#2f5fd8" stroke="#0a1a9a" stroke-width=".6"/><path d="M10.98 6.26l1.02 1.36l1.02-1.36z" fill="#fff"/><circle cx="12" cy="4.305" r="1.7" fill="#f7c6a0"/><path d="M9.9 4.9v-1.02a2.1 1.9 0 0 1 4.2 0v1.02l-.8-.3v-1.02q-1.7 -1.500 -2.5999999999999996 0v1.02z" fill="#6a0c0c"/><path d="M4.67 15.850000000000001v-3.1500000000000004l1.6800000000000002-2.3100000000000005l1.5750000000000002 1.26l1.5750000000000002-1.26l1.5750000000000002 1.26l1.5750000000000002-1.26l1.6800000000000002 2.3100000000000005v3.1500000000000004z" fill="#f01c24" stroke="#a00000" stroke-width=".6"/><path d="M8.24 10.18l1.26 1.6800000000000002l1.26-1.6800000000000002z" fill="#fff"/><circle cx="9.5" cy="7.765" r="2.1" fill="#f7c6a0"/><path d="M7.0 8.5v-1.26a2.5 2.3000000000000003 0 0 1 5.0 0v1.26l-.8-.3v-1.26q-2.1 -1.500 -3.4000000000000004 0v1.26z" fill="#6a0c0c"/></svg>
<svg style="left:615px;top:109px;overflow:hidden" width="16" height="16" viewBox="0 0 16 16"><path d="M1.5 1.5h7l3 3v7h-10z" fill="#fff" stroke="#3a96d2" stroke-width="1"/><path d="M8.5 1.5v3h3" fill="#cfe1f5" stroke="#3a96d2" stroke-width=".8"/><rect x="3" y="5" width="5" height="1" fill="#35b6e6"/><rect x="3" y="7" width="5" height="1" fill="#35b6e6"/><path d="M6.9 12.5v-3.0l1.6-2.2l1.5 1.2l1.5-1.2l1.5 1.2l1.5-1.2l1.6 2.2v3.0z" fill="#2f4fd6" stroke="#0a1a9a" stroke-width=".6"/><path d="M10.3 7.1l1.2 1.6l1.2-1.6z" fill="#fff"/><circle cx="11.5" cy="4.8" r="2.0" fill="#f7c6a0"/><path d="M9.1 5.5v-1.2a2.4 2.2 0 0 1 4.8 0v1.2l-.8-.3v-1.2q-2.0 -1.500 -3.2 0v1.2z" fill="#6a0c0c"/><path d="M3.5 11.5h10l-2 3.800h-6z" fill="#f4f4f4" stroke="#111" stroke-width="1"/><path d="M5.5 11.5l1.300 3.800M7.5 11.5l.7 3.800M9.5 11.5l-.7 3.800M11.5 11.5l-1.300 3.800M4.3 13.2h8.4" stroke="#111" stroke-width=".7"/><path d="M13.0 11.5l2.500-3" stroke="#111" stroke-width="1.300"/></svg>
<svg style="left:638px;top:109px;overflow:hidden" width="16" height="16" viewBox="0 0 16 16"><rect x="0" y="0" width="16" height="16" fill="#fff"/><text x="1" y="5.600" font-size="6.800" font-weight="bold" fill="#1c1ca0" stroke="#1c1ca0" stroke-width=".25" font-family="Liberation Sans,sans-serif" textLength="14.200" lengthAdjust="spacingAndGlyphs">СЧЕТ</text><rect x="1.5" y="8" width="4" height="1" fill="#b8b8c8"/><rect x="1.5" y="10" width="4" height="1" fill="#b8b8c8"/><rect x="1.5" y="12" width="4" height="1" fill="#b8b8c8"/><rect x="7" y="8" width="3" height="1" fill="#b8b8c8"/><rect x="7" y="10" width="3" height="1" fill="#b8b8c8"/><rect x="7" y="12" width="3" height="1" fill="#b8b8c8"/><rect x="11" y="8" width="3.5" height="1" fill="#b8b8c8"/><rect x="11" y="10" width="3.5" height="1" fill="#b8b8c8"/><rect x="11" y="12" width="3.5" height="1" fill="#b8b8c8"/><path d="M10.500 12.500h4l-2 2.500z" fill="#a9c4f2"/></svg>
<svg style="left:661px;top:109px;overflow:hidden" width="16" height="16" viewBox="0 0 16 16"><rect x="0" y="0" width="7.5" height="3.600" fill="#3a12e0"/><rect x="0.8" y="0" width="6.7" height=".9" fill="#4a8af0" opacity=".9"/><path d="M6.9 0h2.600v2.600l-2.600 1z" fill="#0a0a4a"/><rect x="1.1" y="1.7" width="1" height="1" fill="#ffe020"/><rect x="3.1" y="1.7" width="1" height="1" fill="#ffe020"/><rect x="5.1" y="1.7" width="1" height="1" fill="#ffe020"/><path d="M3 4.5l3.200 3.600" stroke="#2a7a00" stroke-width="1.500" stroke-dasharray="1 .7"/><path d="M9.8 4.3v6.500h-6.500l2.300-2 1.200-2.300 1.500-.600z" fill="#a6f500" stroke="#1c5a00" stroke-width=".9" stroke-linejoin="round"/><path d="M10 11.100000000000001l1.300-1.300h4.8v4.8l-1.300 1.300h-4.8z" fill="#b00000"/><path d="M10 11.100000000000001l1.300-1.300h4.8l-1.300 1.300z" fill="#ff5a4a"/><rect x="10" y="11.100000000000001" width="4.8" height="4.8" fill="#ff0a0a"/></svg>
<svg style="left:684px;top:109px;overflow:hidden" width="16" height="16" viewBox="0 0 16 16"><path d="M1.5 1.5h7l3 3v8h-10z" fill="#fff" stroke="#3a96d2" stroke-width="1"/><path d="M8.5 1.5v3h3" fill="#cfe1f5" stroke="#3a96d2" stroke-width=".8"/><rect x="3" y="5" width="5" height="1" fill="#35b6e6"/><rect x="3" y="7" width="5" height="1" fill="#35b6e6"/><path d="M8.09 11.35v-2.55l1.36-1.87l1.275 1.02l1.275-1.02l1.275 1.02l1.275-1.02l1.36 1.87v2.55z" fill="#e3242b" stroke="#a00000" stroke-width=".6"/><path d="M10.98 6.76l1.02 1.36l1.02-1.36z" fill="#fff"/><circle cx="12" cy="4.805" r="1.7" fill="#f7c6a0"/><path d="M9.9 5.4v-1.02a2.1 1.9 0 0 1 4.2 0v1.02l-.8-.3v-1.02q-1.7 -1.500 -2.5999999999999996 0v1.02z" fill="#6a0c0c"/><path d="M3.9000000000000004 16.0v-3.0l1.6-2.2l1.5 1.2l1.5-1.2l1.5 1.2l1.5-1.2l1.6 2.2v3.0z" fill="#2f6bd6" stroke="#0a1a9a" stroke-width=".6"/><path d="M7.3 10.6l1.2 1.6l1.2-1.6z" fill="#fff"/><circle cx="8.5" cy="8.3" r="2.0" fill="#f7c6a0"/><path d="M6.1 9.0v-1.2a2.4 2.2 0 0 1 4.8 0v1.2l-.8-.3v-1.2q-2.0 -1.500 -3.2 0v1.2z" fill="#6a0c0c"/></svg>
<svg style="left:707px;top:109px;overflow:hidden" width="16" height="16" viewBox="0 0 16 16"><path d="M1.5 1.5h7l3 3v9h-10z" fill="#fff" stroke="#3a96d2" stroke-width="1"/><path d="M8.5 1.5v3h3" fill="#cfe1f5" stroke="#3a96d2" stroke-width=".8"/><rect x="3" y="5" width="5" height="1" fill="#35b6e6"/><rect x="3" y="7" width="5" height="1" fill="#35b6e6"/><path d="M5.500 5.500q5.500-3 7 3" fill="none" stroke="#14305a" stroke-width="1.100"/><path d="M10.300 7l2.200 2.200 1.800-2.700" fill="none" stroke="#14305a" stroke-width="1.100"/><ellipse cx="12.5" cy="14.6" rx="2.5" ry="1.350" fill="#f2b705" stroke="#4a3000" stroke-width=".8"/><path d="M11.0 14.299999999999999h2.5" stroke="#fff3a8" stroke-width=".8"/><ellipse cx="12.5" cy="12.5" rx="2.5" ry="1.350" fill="#f2b705" stroke="#4a3000" stroke-width=".8"/><path d="M11.0 12.2h2.5" stroke="#fff3a8" stroke-width=".8"/><ellipse cx="12.5" cy="10.399999999999999" rx="2.5" ry="1.350" fill="#f2b705" stroke="#4a3000" stroke-width=".8"/><path d="M11.0 10.099999999999998h2.5" stroke="#fff3a8" stroke-width=".8"/></svg>
<svg style="left:730px;top:109px;overflow:hidden" width="16" height="16" viewBox="0 0 16 16"><path d="M1 4.5l3-1.800v9.300l-3 .5z" fill="#f27a10"/><path d="M4 2.7l3.500-1.700h1.500v9.800l-5 1.200z" fill="#f6d516"/><path d="M1 4.5l3-1.800 3.500-1.700" fill="none" stroke="#f9a030" stroke-width=".6"/><path d="M1.3 5.8l2.500-.5" stroke="#ffc070" stroke-width=".7" stroke-dasharray=".8 .6"/><path d="M4.3 5.1l4.400-1" stroke="#fff7a0" stroke-width=".6"/><path d="M1.3 7.8l2.500-.5" stroke="#ffc070" stroke-width=".7" stroke-dasharray=".8 .6"/><path d="M4.3 7.1l4.400-1" stroke="#fff7a0" stroke-width=".6"/><path d="M1.3 9.8l2.500-.5" stroke="#ffc070" stroke-width=".7" stroke-dasharray=".8 .6"/><path d="M4.3 9.100000000000001l4.400-1" stroke="#fff7a0" stroke-width=".6"/><path d="M1.3 11.8l2.500-.5" stroke="#ffc070" stroke-width=".7" stroke-dasharray=".8 .6"/><path d="M4.3 11.100000000000001l4.400-1" stroke="#fff7a0" stroke-width=".6"/><ellipse cx="11.5" cy="14.0" rx="3.0" ry="1.350" fill="#f2b705" stroke="#4a3000" stroke-width=".8"/><path d="M9.5 13.7h3.5" stroke="#fff3a8" stroke-width=".8"/><ellipse cx="11.5" cy="11.9" rx="3.0" ry="1.350" fill="#f2b705" stroke="#4a3000" stroke-width=".8"/><path d="M9.5 11.6h3.5" stroke="#fff3a8" stroke-width=".8"/><ellipse cx="11.5" cy="9.8" rx="3.0" ry="1.350" fill="#f2b705" stroke="#4a3000" stroke-width=".8"/><path d="M9.5 9.5h3.5" stroke="#fff3a8" stroke-width=".8"/></svg>
<div class="t" style="left:754px;top:111px;color:#1a1a1a;">Упаковочный лист</div>
<div class="t" style="left:857px;top:111px;color:#1a1a1a;">Сравнение продаж двух периодов</div>
<svg style="left:1037px;top:122px" width="7" height="4" viewBox="0 0 7 4"><path d="M0 0h7l-3.500 4z" fill="#4a3a16"/></svg>
<div style="left:1053px;top:110px;width:3px;height:1px;background:#b5ad8a;"></div><div style="left:1053px;top:112px;width:3px;height:1px;background:#b5ad8a;"></div><div style="left:1053px;top:114px;width:3px;height:1px;background:#b5ad8a;"></div><div style="left:1053px;top:116px;width:3px;height:1px;background:#b5ad8a;"></div><div style="left:1053px;top:118px;width:3px;height:1px;background:#b5ad8a;"></div><div style="left:1053px;top:120px;width:3px;height:1px;background:#b5ad8a;"></div><div style="left:1053px;top:122px;width:3px;height:1px;background:#b5ad8a;"></div>
<svg style="left:1062px;top:109px;overflow:hidden" width="16" height="16" viewBox="0 0 16 16"><path d="M1 3l3.500-3h11.500l-4 3z" fill="#8c3030"/><path d="M12 3l4-3v12.500l-4 3z" fill="#6a2c2c"/><rect x="1" y="3" width="11" height="4.200" fill="#ff6a00"/><rect x="1" y="7.200" width="11" height="1" fill="#4a1a10"/><rect x="2" y="8" width="9.500" height="2.200" fill="#fff"/><rect x="0" y="10.300" width="11.300" height="4.700" fill="#ff6a00"/><path d="M0 15h11.300l.7.500h-11z" fill="#b84a00"/><rect x="4" y="4.300" width="4.500" height="1.100" fill="#ffe23a"/><rect x="4.500" y="5.400" width="4.500" height=".5" fill="#c04a00"/><rect x="3" y="12" width="4.500" height="1.100" fill="#ffe23a"/><rect x="3.500" y="13.100" width="4.500" height=".5" fill="#c04a00"/></svg>
<svg style="left:1085px;top:109px;overflow:hidden" width="16" height="16" viewBox="0 0 16 16"><rect x="1.500" y="0.500" width="10" height="7" fill="#fff" stroke="#2a5fe0" stroke-width="1.200"/><rect x="2.500" y="1.500" width="8" height="1.600" fill="#2a5fe0"/><path d="M3 4.500h7M3 6h7" stroke="#2a5fe0" stroke-width=".9"/><path d="M0.500 10l3-3h11.500l-3 3z" fill="#e8e8e8" stroke="#555" stroke-width=".6"/><path d="M0.500 10h11.500v3.500h-11.500z" fill="#cfcfcf" stroke="#555" stroke-width=".6"/><path d="M12 10l3-3v3.500l-3 3z" fill="#333"/><rect x="1.500" y="14" width="10" height="1.200" fill="#888"/><rect x="2" y="11" width="1.200" height="1" fill="#2fae2f"/></svg>
<svg style="left:1108px;top:109px;overflow:hidden" width="16" height="16" viewBox="0 0 16 16"><rect x="1.500" y="0.500" width="10" height="7" fill="#fff" stroke="#2aa79a" stroke-width="1.200"/><rect x="2.500" y="1.500" width="8" height="1.600" fill="#2aa79a"/><path d="M3 4.500h7M3 6h7" stroke="#2aa79a" stroke-width=".9"/><path d="M0.500 10l3-3h11.500l-3 3z" fill="#e8e8e8" stroke="#555" stroke-width=".6"/><path d="M0.500 10h11.500v3.500h-11.500z" fill="#cfcfcf" stroke="#555" stroke-width=".6"/><path d="M12 10l3-3v3.500l-3 3z" fill="#333"/><rect x="1.500" y="14" width="10" height="1.200" fill="#888"/><rect x="2" y="11" width="1.200" height="1" fill="#2fae2f"/></svg>
<svg style="left:1131px;top:109px;overflow:hidden" width="16" height="16" viewBox="0 0 16 16"><rect x="1.500" y="0.500" width="10" height="7" fill="#fff" stroke="#f08a2a" stroke-width="1.200"/><rect x="2.500" y="1.500" width="8" height="1.600" fill="#f08a2a"/><path d="M3 4.500h7M3 6h7" stroke="#f08a2a" stroke-width=".9"/><path d="M0.500 10l3-3h11.500l-3 3z" fill="#e8e8e8" stroke="#555" stroke-width=".6"/><path d="M0.500 10h11.500v3.500h-11.500z" fill="#cfcfcf" stroke="#555" stroke-width=".6"/><path d="M12 10l3-3v3.500l-3 3z" fill="#333"/><rect x="1.500" y="14" width="10" height="1.200" fill="#888"/><rect x="2" y="11" width="1.200" height="1" fill="#2fae2f"/></svg>
<div style="left:1152px;top:108px;width:1px;height:18px;background:#c9c2a6;"></div><div style="left:1153px;top:108px;width:1px;height:18px;background:#f8f5ec;"></div>
<svg style="left:1158px;top:109px;overflow:hidden" width="16" height="16" viewBox="0 0 16 16"><path d="M2 0h2.600v1.200h-2.600z" fill="#8a6a3a"/><rect x="2.2" y="1" width="2.300" height="1.900" fill="#f7c6a0"/><path d="M0.3 4q0-1 1-1h3.600q1 0 1 1v5h-.9v6h-1.900v-5h-.6v5h-1.900v-6h-.300z" fill="#2a55d0"/><path d="M3.2 3h2.400v12h-1.900v-5h-.500z" fill="#0a16a0"/><rect x="0.9" y="15" width="2" height="1" fill="#3a1a10"/><rect x="3.5" y="15" width="2" height="1" fill="#3a1a10"/><rect x="-0.1" y="8.800" width=".9" height="1" fill="#f7c6a0"/><path d="M9 0h2.600v1.200h-2.600z" fill="#8a6a3a"/><rect x="9.2" y="1" width="2.300" height="1.900" fill="#f7c6a0"/><path d="M7.3 4q0-1 1-1h3.600q1 0 1 1v5h-.9v6h-1.900v-5h-.6v5h-1.900v-6h-.300z" fill="#0a16a0"/><path d="M7.3 3h2.400v12h-1.900v-5h-.500z" fill="#2f60d8"/><rect x="7.9" y="15" width="2" height="1" fill="#3a1a10"/><rect x="10.5" y="15" width="2" height="1" fill="#3a1a10"/><rect x="12.5" y="8.800" width=".9" height="1" fill="#f7c6a0"/><path d="M6.500 7l.6 1.400 1.400.6-1.400.6-.6 1.400-.6-1.400-1.400-.6 1.400-.6z" fill="#fff"/></svg>
<svg style="left:1182px;top:109px;overflow:hidden" width="16" height="16" viewBox="0 0 16 16"><rect x="0.500" y="0.500" width="15" height="15" fill="#6f9a78" stroke="#4a6a52"/><rect x="1.500" y="1.500" width="13" height="3.500" fill="#b9c6d6"/><rect x="1.500" y="5.500" width="13" height="2.500" fill="#c9d3e0"/><ellipse cx="8" cy="11.500" rx="6" ry="3.300" fill="#c9f0c9"/><text x="8" y="14.300" font-size="7" font-weight="bold" text-anchor="middle" fill="#3c8a4a" font-family="Liberation Sans,sans-serif">$</text></svg>
<svg style="left:1205px;top:109px;overflow:hidden" width="16" height="16" viewBox="0 0 16 16"><path d="M1 12l2-6h7l3 6z" fill="#3a3ab0" stroke="#222" stroke-width=".5"/><path d="M3.500 7.500h6M3 9h7M2.500 10.500h8" stroke="#dfe3f5" stroke-width=".8" stroke-dasharray="1 1"/><path d="M0.500 12h15v3h-15z" fill="#e6dfa8" stroke="#6a6a3a" stroke-width=".6"/><path d="M10 6l3-4 2 1-2 9h-2z" fill="#d8d8c0" stroke="#444" stroke-width=".6"/><path d="M4 3q2-3 4-1l-1 2.500h-2.500z" fill="#fff" stroke="#666" stroke-width=".5"/><rect x="9" y="3" width="2" height="2" fill="#d22"/><path d="M13 3l2-2.500" stroke="#111" stroke-width="1.200"/></svg>
<svg style="left:1227px;top:122px" width="7" height="4" viewBox="0 0 7 4"><path d="M0 0h7l-3.500 4z" fill="#4a3a16"/></svg>
<div style="left:1243px;top:110px;width:3px;height:1px;background:#b5ad8a;"></div><div style="left:1243px;top:112px;width:3px;height:1px;background:#b5ad8a;"></div><div style="left:1243px;top:114px;width:3px;height:1px;background:#b5ad8a;"></div><div style="left:1243px;top:116px;width:3px;height:1px;background:#b5ad8a;"></div><div style="left:1243px;top:118px;width:3px;height:1px;background:#b5ad8a;"></div><div style="left:1243px;top:120px;width:3px;height:1px;background:#b5ad8a;"></div><div style="left:1243px;top:122px;width:3px;height:1px;background:#b5ad8a;"></div>
<svg style="left:1252px;top:109px;overflow:hidden" width="16" height="16" viewBox="0 0 16 16"><path d="M0.8 4.5l3-1.800v9.300l-3 .5z" fill="#f27a10"/><path d="M3.8 2.7l3.500-1.700h1.500v9.800l-5 1.200z" fill="#f6d516"/><path d="M0.8 4.5l3-1.800 3.500-1.700" fill="none" stroke="#f9a030" stroke-width=".6"/><path d="M1.1 5.8l2.500-.5" stroke="#ffc070" stroke-width=".7" stroke-dasharray=".8 .6"/><path d="M4.1 5.1l4.400-1" stroke="#fff7a0" stroke-width=".6"/><path d="M1.1 7.8l2.500-.5" stroke="#ffc070" stroke-width=".7" stroke-dasharray=".8 .6"/><path d="M4.1 7.1l4.400-1" stroke="#fff7a0" stroke-width=".6"/><path d="M1.1 9.8l2.500-.5" stroke="#ffc070" stroke-width=".7" stroke-dasharray=".8 .6"/><path d="M4.1 9.100000000000001l4.400-1" stroke="#fff7a0" stroke-width=".6"/><path d="M1.1 11.8l2.500-.5" stroke="#ffc070" stroke-width=".7" stroke-dasharray=".8 .6"/><path d="M4.1 11.100000000000001l4.400-1" stroke="#fff7a0" stroke-width=".6"/><path d="M8.09 10.85v-2.55l1.36-1.87l1.275 1.02l1.275-1.02l1.275 1.02l1.275-1.02l1.36 1.87v2.55z" fill="#2f5fd8" stroke="#0a1a9a" stroke-width=".6"/><path d="M10.98 6.26l1.02 1.36l1.02-1.36z" fill="#fff"/><circle cx="12" cy="4.305" r="1.7" fill="#f7c6a0"/><path d="M9.9 4.9v-1.02a2.1 1.9 0 0 1 4.2 0v1.02l-.8-.3v-1.02q-1.7 -1.500 -2.5999999999999996 0v1.02z" fill="#6a0c0c"/><path d="M4.67 15.850000000000001v-3.1500000000000004l1.6800000000000002-2.3100000000000005l1.5750000000000002 1.26l1.5750000000000002-1.26l1.5750000000000002 1.26l1.5750000000000002-1.26l1.6800000000000002 2.3100000000000005v3.1500000000000004z" fill="#f01c24" stroke="#a00000" stroke-width=".6"/><path d="M8.24 10.18l1.26 1.6800000000000002l1.26-1.6800000000000002z" fill="#fff"/><circle cx="9.5" cy="7.765" r="2.1" fill="#f7c6a0"/><path d="M7.0 8.5v-1.26a2.5 2.3000000000000003 0 0 1 5.0 0v1.26l-.8-.3v-1.26q-2.1 -1.500 -3.4000000000000004 0v1.26z" fill="#6a0c0c"/></svg>
<svg style="left:1275px;top:109px;overflow:hidden" width="16" height="16" viewBox="0 0 16 16"><path d="M1 3.0l3-1.800v9.300l-3 .5z" fill="#f27a10"/><path d="M4 1.2l3.500-1.700h1.500v9.800l-5 1.200z" fill="#f6d516"/><path d="M1 3.0l3-1.800 3.500-1.700" fill="none" stroke="#f9a030" stroke-width=".6"/><path d="M1.3 4.3l2.500-.5" stroke="#ffc070" stroke-width=".7" stroke-dasharray=".8 .6"/><path d="M4.3 3.5999999999999996l4.400-1" stroke="#fff7a0" stroke-width=".6"/><path d="M1.3 6.3l2.500-.5" stroke="#ffc070" stroke-width=".7" stroke-dasharray=".8 .6"/><path d="M4.3 5.6l4.400-1" stroke="#fff7a0" stroke-width=".6"/><path d="M1.3 8.3l2.500-.5" stroke="#ffc070" stroke-width=".7" stroke-dasharray=".8 .6"/><path d="M4.3 7.6000000000000005l4.400-1" stroke="#fff7a0" stroke-width=".6"/><path d="M1.3 10.3l2.500-.5" stroke="#ffc070" stroke-width=".7" stroke-dasharray=".8 .6"/><path d="M4.3 9.600000000000001l4.400-1" stroke="#fff7a0" stroke-width=".6"/><path d="M6.4 13.0v-3.0l1.6-2.2l1.5 1.2l1.5-1.2l1.5 1.2l1.5-1.2l1.6 2.2v3.0z" fill="#2f4fd6" stroke="#0a1a9a" stroke-width=".6"/><path d="M9.8 7.6l1.2 1.6l1.2-1.6z" fill="#fff"/><circle cx="11" cy="5.3" r="2.0" fill="#f7c6a0"/><path d="M8.6 6.0v-1.2a2.4 2.2 0 0 1 4.8 0v1.2l-.8-.3v-1.2q-2.0 -1.500 -3.2 0v1.2z" fill="#6a0c0c"/><path d="M0.5 11h10l-2 3.800h-6z" fill="#f4f4f4" stroke="#111" stroke-width="1"/><path d="M2.5 11l1.300 3.800M4.5 11l.7 3.800M6.5 11l-.7 3.800M8.5 11l-1.300 3.800M1.3 12.7h8.4" stroke="#111" stroke-width=".7"/><path d="M10.0 11l2.500-3" stroke="#111" stroke-width="1.300"/></svg>
<svg style="left:1298px;top:109px;overflow:hidden" width="16" height="16" viewBox="0 0 16 16"><path d="M1 3.0l3-1.800v9.300l-3 .5z" fill="#f27a10"/><path d="M4 1.2l3.500-1.700h1.500v9.800l-5 1.200z" fill="#f6d516"/><path d="M1 3.0l3-1.800 3.500-1.700" fill="none" stroke="#f9a030" stroke-width=".6"/><path d="M1.3 4.3l2.500-.5" stroke="#ffc070" stroke-width=".7" stroke-dasharray=".8 .6"/><path d="M4.3 3.5999999999999996l4.400-1" stroke="#fff7a0" stroke-width=".6"/><path d="M1.3 6.3l2.500-.5" stroke="#ffc070" stroke-width=".7" stroke-dasharray=".8 .6"/><path d="M4.3 5.6l4.400-1" stroke="#fff7a0" stroke-width=".6"/><path d="M1.3 8.3l2.500-.5" stroke="#ffc070" stroke-width=".7" stroke-dasharray=".8 .6"/><path d="M4.3 7.6000000000000005l4.400-1" stroke="#fff7a0" stroke-width=".6"/><path d="M1.3 10.3l2.500-.5" stroke="#ffc070" stroke-width=".7" stroke-dasharray=".8 .6"/><path d="M4.3 9.600000000000001l4.400-1" stroke="#fff7a0" stroke-width=".6"/><path d="M6.4 12.5v-3.0l1.6-2.2l1.5 1.2l1.5-1.2l1.5 1.2l1.5-1.2l1.6 2.2v3.0z" fill="#e3242b" stroke="#a00000" stroke-width=".6"/><path d="M9.8 7.1l1.2 1.6l1.2-1.6z" fill="#fff"/><circle cx="11" cy="4.8" r="2.0" fill="#f7c6a0"/><path d="M8.6 5.5v-1.2a2.4 2.2 0 0 1 4.8 0v1.2l-.8-.3v-1.2q-2.0 -1.500 -3.2 0v1.2z" fill="#6a0c0c"/><path d="M1.5 11h10l-2 3.800h-6z" fill="#f4f4f4" stroke="#111" stroke-width="1"/><path d="M3.5 11l1.300 3.800M5.5 11l.7 3.800M7.5 11l-.7 3.800M9.5 11l-1.300 3.800M2.3 12.7h8.4" stroke="#111" stroke-width=".7"/><path d="M11.0 11l2.500-3" stroke="#111" stroke-width="1.300"/></svg>
<svg style="left:1321px;top:109px;overflow:hidden" width="16" height="16" viewBox="0 0 16 16"><path d="M1 4.5l3-1.800v9.300l-3 .5z" fill="#f27a10"/><path d="M4 2.7l3.500-1.700h1.500v9.800l-5 1.200z" fill="#f6d516"/><path d="M1 4.5l3-1.800 3.500-1.700" fill="none" stroke="#f9a030" stroke-width=".6"/><path d="M1.3 5.8l2.500-.5" stroke="#ffc070" stroke-width=".7" stroke-dasharray=".8 .6"/><path d="M4.3 5.1l4.400-1" stroke="#fff7a0" stroke-width=".6"/><path d="M1.3 7.8l2.500-.5" stroke="#ffc070" stroke-width=".7" stroke-dasharray=".8 .6"/><path d="M4.3 7.1l4.400-1" stroke="#fff7a0" stroke-width=".6"/><path d="M1.3 9.8l2.500-.5" stroke="#ffc070" stroke-width=".7" stroke-dasharray=".8 .6"/><path d="M4.3 9.100000000000001l4.400-1" stroke="#fff7a0" stroke-width=".6"/><path d="M1.3 11.8l2.500-.5" stroke="#ffc070" stroke-width=".7" stroke-dasharray=".8 .6"/><path d="M4.3 11.100000000000001l4.400-1" stroke="#fff7a0" stroke-width=".6"/><ellipse cx="11.5" cy="14.0" rx="3.0" ry="1.350" fill="#f2b705" stroke="#4a3000" stroke-width=".8"/><path d="M9.5 13.7h3.5" stroke="#fff3a8" stroke-width=".8"/><ellipse cx="11.5" cy="11.9" rx="3.0" ry="1.350" fill="#f2b705" stroke="#4a3000" stroke-width=".8"/><path d="M9.5 11.6h3.5" stroke="#fff3a8" stroke-width=".8"/><ellipse cx="11.5" cy="9.8" rx="3.0" ry="1.350" fill="#f2b705" stroke="#4a3000" stroke-width=".8"/><path d="M9.5 9.5h3.5" stroke="#fff3a8" stroke-width=".8"/></svg>
<svg style="left:1344px;top:109px;overflow:hidden" width="16" height="16" viewBox="0 0 16 16"><path d="M1 3.5l3-1.800v9.300l-3 .5z" fill="#f27a10"/><path d="M4 1.7l3.500-1.700h1.500v9.800l-5 1.200z" fill="#f6d516"/><path d="M1 3.5l3-1.800 3.500-1.700" fill="none" stroke="#f9a030" stroke-width=".6"/><path d="M1.3 4.8l2.500-.5" stroke="#ffc070" stroke-width=".7" stroke-dasharray=".8 .6"/><path d="M4.3 4.1l4.400-1" stroke="#fff7a0" stroke-width=".6"/><path d="M1.3 6.8l2.500-.5" stroke="#ffc070" stroke-width=".7" stroke-dasharray=".8 .6"/><path d="M4.3 6.1l4.400-1" stroke="#fff7a0" stroke-width=".6"/><path d="M1.3 8.8l2.500-.5" stroke="#ffc070" stroke-width=".7" stroke-dasharray=".8 .6"/><path d="M4.3 8.100000000000001l4.400-1" stroke="#fff7a0" stroke-width=".6"/><path d="M1.3 10.8l2.500-.5" stroke="#ffc070" stroke-width=".7" stroke-dasharray=".8 .6"/><path d="M4.3 10.100000000000001l4.400-1" stroke="#fff7a0" stroke-width=".6"/><path d="M9 3h1.500v8h-1.500zM11.500 2l1 0v9h-1zM13.500 4h1v7h-1z" fill="#b0b0b0" stroke="#666" stroke-width=".4"/><path d="M2.500 11h12.500v4h-12.500z" fill="#8a8a8a" stroke="#555" stroke-width=".5"/><path d="M4.500 11.500v3M6.500 11.500v3M8.500 11.500v3M10.500 11.500v3M12.500 11.500v3" stroke="#e0e0e0" stroke-width=".8"/></svg>
<svg style="left:1367px;top:109px;overflow:hidden" width="16" height="16" viewBox="0 0 16 16"><path d="M1 3.5l3-1.800v9.300l-3 .5z" fill="#f27a10"/><path d="M4 1.7l3.500-1.700h1.500v9.800l-5 1.200z" fill="#f6d516"/><path d="M1 3.5l3-1.800 3.500-1.700" fill="none" stroke="#f9a030" stroke-width=".6"/><path d="M1.3 4.8l2.500-.5" stroke="#ffc070" stroke-width=".7" stroke-dasharray=".8 .6"/><path d="M4.3 4.1l4.400-1" stroke="#fff7a0" stroke-width=".6"/><path d="M1.3 6.8l2.500-.5" stroke="#ffc070" stroke-width=".7" stroke-dasharray=".8 .6"/><path d="M4.3 6.1l4.400-1" stroke="#fff7a0" stroke-width=".6"/><path d="M1.3 8.8l2.500-.5" stroke="#ffc070" stroke-width=".7" stroke-dasharray=".8 .6"/><path d="M4.3 8.100000000000001l4.400-1" stroke="#fff7a0" stroke-width=".6"/><path d="M1.3 10.8l2.500-.5" stroke="#ffc070" stroke-width=".7" stroke-dasharray=".8 .6"/><path d="M4.3 10.100000000000001l4.400-1" stroke="#fff7a0" stroke-width=".6"/><path d="M6 11.500l1-1.500h8.500l-1 1.500z" fill="#999"/><rect x="6" y="11.500" width="8.500" height="2.500" fill="#555" stroke="#333" stroke-width=".4"/><circle cx="8" cy="12.800" r=".5" fill="#ddd"/><circle cx="10" cy="12.800" r=".5" fill="#ddd"/><circle cx="12" cy="12.800" r=".5" fill="#ddd"/></svg>
<svg style="left:1390px;top:109px;overflow:hidden" width="16" height="16" viewBox="0 0 16 16"><path d="M1 4.5l3-1.800v9.300l-3 .5z" fill="#f27a10"/><path d="M4 2.7l3.500-1.700h1.500v9.800l-5 1.200z" fill="#f6d516"/><path d="M1 4.5l3-1.800 3.500-1.700" fill="none" stroke="#f9a030" stroke-width=".6"/><path d="M1.3 5.8l2.500-.5" stroke="#ffc070" stroke-width=".7" stroke-dasharray=".8 .6"/><path d="M4.3 5.1l4.400-1" stroke="#fff7a0" stroke-width=".6"/><path d="M1.3 7.8l2.500-.5" stroke="#ffc070" stroke-width=".7" stroke-dasharray=".8 .6"/><path d="M4.3 7.1l4.400-1" stroke="#fff7a0" stroke-width=".6"/><path d="M1.3 9.8l2.500-.5" stroke="#ffc070" stroke-width=".7" stroke-dasharray=".8 .6"/><path d="M4.3 9.100000000000001l4.400-1" stroke="#fff7a0" stroke-width=".6"/><path d="M1.3 11.8l2.500-.5" stroke="#ffc070" stroke-width=".7" stroke-dasharray=".8 .6"/><path d="M4.3 11.100000000000001l4.400-1" stroke="#fff7a0" stroke-width=".6"/><ellipse cx="6.5" cy="14.5" rx="2.75" ry="1.350" fill="#f2b705" stroke="#4a3000" stroke-width=".8"/><path d="M4.75 14.2h3.0" stroke="#fff3a8" stroke-width=".8"/><ellipse cx="6.5" cy="12.4" rx="2.75" ry="1.350" fill="#f2b705" stroke="#4a3000" stroke-width=".8"/><path d="M4.75 12.1h3.0" stroke="#fff3a8" stroke-width=".8"/><ellipse cx="6.5" cy="10.3" rx="2.75" ry="1.350" fill="#f2b705" stroke="#4a3000" stroke-width=".8"/><path d="M4.75 10.0h3.0" stroke="#fff3a8" stroke-width=".8"/><ellipse cx="13" cy="14.5" rx="2.5" ry="1.350" fill="#f2b705" stroke="#4a3000" stroke-width=".8"/><path d="M11.5 14.2h2.5" stroke="#fff3a8" stroke-width=".8"/></svg>
<div style="left:1411px;top:108px;width:1px;height:18px;background:#c9c2a6;"></div><div style="left:1412px;top:108px;width:1px;height:18px;background:#f8f5ec;"></div>
<svg style="left:1418px;top:109px;overflow:hidden" width="16" height="16" viewBox="0 0 16 16"><path d="M1.5 1.5h7l3 3v7h-10z" fill="#fff" stroke="#3a96d2" stroke-width="1"/><path d="M8.5 1.5v3h3" fill="#cfe1f5" stroke="#3a96d2" stroke-width=".8"/><rect x="3" y="5" width="5" height="1" fill="#35b6e6"/><rect x="3" y="7" width="5" height="1" fill="#35b6e6"/><path d="M6.9 12.5v-3.0l1.6-2.2l1.5 1.2l1.5-1.2l1.5 1.2l1.5-1.2l1.6 2.2v3.0z" fill="#2f4fd6" stroke="#0a1a9a" stroke-width=".6"/><path d="M10.3 7.1l1.2 1.6l1.2-1.6z" fill="#fff"/><circle cx="11.5" cy="4.8" r="2.0" fill="#f7c6a0"/><path d="M9.1 5.5v-1.2a2.4 2.2 0 0 1 4.8 0v1.2l-.8-.3v-1.2q-2.0 -1.500 -3.2 0v1.2z" fill="#6a0c0c"/><path d="M3.5 11.5h10l-2 3.800h-6z" fill="#f4f4f4" stroke="#111" stroke-width="1"/><path d="M5.5 11.5l1.300 3.800M7.5 11.5l.7 3.800M9.5 11.5l-.7 3.800M11.5 11.5l-1.300 3.800M4.3 13.2h8.4" stroke="#111" stroke-width=".7"/><path d="M13.0 11.5l2.500-3" stroke="#111" stroke-width="1.300"/></svg>
<svg style="left:1441px;top:109px;overflow:hidden" width="16" height="16" viewBox="0 0 16 16"><rect x="0" y="0" width="7.5" height="3.600" fill="#3a12e0"/><rect x="0.8" y="0" width="6.7" height=".9" fill="#4a8af0" opacity=".9"/><path d="M6.9 0h2.600v2.600l-2.600 1z" fill="#0a0a4a"/><rect x="1.1" y="1.7" width="1" height="1" fill="#ffe020"/><rect x="3.1" y="1.7" width="1" height="1" fill="#ffe020"/><rect x="5.1" y="1.7" width="1" height="1" fill="#ffe020"/><path d="M3 4.5l3.200 3.600" stroke="#2a7a00" stroke-width="1.500" stroke-dasharray="1 .7"/><path d="M9.8 4.3v6.500h-6.500l2.300-2 1.200-2.300 1.500-.600z" fill="#a6f500" stroke="#1c5a00" stroke-width=".9" stroke-linejoin="round"/><path d="M10 11.100000000000001l1.300-1.300h4.8v4.8l-1.300 1.300h-4.8z" fill="#b00000"/><path d="M10 11.100000000000001l1.300-1.300h4.8l-1.300 1.300z" fill="#ff5a4a"/><rect x="10" y="11.100000000000001" width="4.8" height="4.8" fill="#ff0a0a"/></svg>
<svg style="left:1464px;top:109px;overflow:hidden" width="16" height="16" viewBox="0 0 16 16"><path d="M1.5 1.5h7l3 3v7h-10z" fill="#fff" stroke="#3a96d2" stroke-width="1"/><path d="M8.5 1.5v3h3" fill="#cfe1f5" stroke="#3a96d2" stroke-width=".8"/><rect x="3" y="5" width="5" height="1" fill="#35b6e6"/><rect x="3" y="7" width="5" height="1" fill="#35b6e6"/><path d="M6.9 12.5v-3.0l1.6-2.2l1.5 1.2l1.5-1.2l1.5 1.2l1.5-1.2l1.6 2.2v3.0z" fill="#e3242b" stroke="#a00000" stroke-width=".6"/><path d="M10.3 7.1l1.2 1.6l1.2-1.6z" fill="#fff"/><circle cx="11.5" cy="4.8" r="2.0" fill="#f7c6a0"/><path d="M9.1 5.5v-1.2a2.4 2.2 0 0 1 4.8 0v1.2l-.8-.3v-1.2q-2.0 -1.500 -3.2 0v1.2z" fill="#6a0c0c"/><path d="M3.5 11.5h10l-2 3.800h-6z" fill="#f4f4f4" stroke="#111" stroke-width="1"/><path d="M5.5 11.5l1.300 3.800M7.5 11.5l.7 3.800M9.5 11.5l-.7 3.800M11.5 11.5l-1.300 3.800M4.3 13.2h8.4" stroke="#111" stroke-width=".7"/><path d="M13.0 11.5l2.500-3" stroke="#111" stroke-width="1.300"/></svg>
<svg style="left:1487px;top:109px;overflow:hidden" width="16" height="16" viewBox="0 0 16 16"><path d="M0.5 1.6l1.300-1.300h4.6v4.6l-1.300 1.300h-4.6z" fill="#b00000"/><path d="M0.5 1.6l1.300-1.300h4.6l-1.300 1.300z" fill="#ff5a4a"/><rect x="0.5" y="1.6" width="4.6" height="4.6" fill="#ff0a0a"/><path d="M3.5 5l3.200 3.600" stroke="#2a7a00" stroke-width="1.500" stroke-dasharray="1 .7"/><path d="M10.3 4.8v6.500h-6.500l2.300-2 1.200-2.300 1.500-.600z" fill="#a6f500" stroke="#1c5a00" stroke-width=".9" stroke-linejoin="round"/><rect x="6" y="12.2" width="7.5" height="3.600" fill="#2a12c8"/><rect x="6.8" y="12.2" width="6.7" height=".9" fill="#4a8af0" opacity=".9"/><path d="M12.9 12.2h2.600v2.600l-2.600 1z" fill="#0a0a4a"/><rect x="7.1" y="13.899999999999999" width="1" height="1" fill="#fff"/><rect x="9.1" y="13.899999999999999" width="1" height="1" fill="#fff"/><rect x="11.1" y="13.899999999999999" width="1" height="1" fill="#fff"/></svg>
<svg style="left:1510px;top:109px;overflow:hidden" width="16" height="16" viewBox="0 0 16 16"><path d="M0.5 1.6l1.300-1.300h4.6v4.6l-1.300 1.300h-4.6z" fill="#b00000"/><path d="M0.5 1.6l1.300-1.300h4.6l-1.300 1.300z" fill="#ff5a4a"/><rect x="0.5" y="1.6" width="4.6" height="4.6" fill="#ff0a0a"/><path d="M3.5 5l3.200 3.600" stroke="#2a7a00" stroke-width="1.500" stroke-dasharray="1 .7"/><path d="M10.3 4.8v6.500h-6.500l2.300-2 1.200-2.300 1.500-.600z" fill="#a6f500" stroke="#1c5a00" stroke-width=".9" stroke-linejoin="round"/><rect x="6.5" y="11.8" width="7" height="3.600" fill="#2f8af0"/><rect x="7.3" y="11.8" width="6.2" height=".9" fill="#4a8af0" opacity=".9"/><path d="M12.9 11.8h2.600v2.600l-2.600 1z" fill="#0a0a4a"/><rect x="7.6" y="13.5" width="1" height="1" fill="#fff"/><rect x="9.6" y="13.5" width="1" height="1" fill="#fff"/><rect x="11.6" y="13.5" width="1" height="1" fill="#fff"/></svg>
<svg style="left:1533px;top:109px;overflow:hidden" width="16" height="16" viewBox="0 0 16 16"><ellipse cx="4" cy="14.5" rx="3.0" ry="1.350" fill="#f2b705" stroke="#4a3000" stroke-width=".8"/><path d="M2.0 14.2h3.5" stroke="#fff3a8" stroke-width=".8"/><ellipse cx="4" cy="12.4" rx="3.0" ry="1.350" fill="#f2b705" stroke="#4a3000" stroke-width=".8"/><path d="M2.0 12.1h3.5" stroke="#fff3a8" stroke-width=".8"/><ellipse cx="4" cy="10.3" rx="3.0" ry="1.350" fill="#f2b705" stroke="#4a3000" stroke-width=".8"/><path d="M2.0 10.0h3.5" stroke="#fff3a8" stroke-width=".8"/><ellipse cx="4" cy="8.2" rx="3.0" ry="1.350" fill="#f2b705" stroke="#4a3000" stroke-width=".8"/><path d="M2.0 7.8999999999999995h3.5" stroke="#fff3a8" stroke-width=".8"/><ellipse cx="4" cy="6.1" rx="3.0" ry="1.350" fill="#f2b705" stroke="#4a3000" stroke-width=".8"/><path d="M2.0 5.8h3.5" stroke="#fff3a8" stroke-width=".8"/><ellipse cx="11.5" cy="14.5" rx="2.75" ry="1.350" fill="#f2b705" stroke="#4a3000" stroke-width=".8"/><path d="M9.75 14.2h3.0" stroke="#fff3a8" stroke-width=".8"/><ellipse cx="11.5" cy="12.4" rx="2.75" ry="1.350" fill="#f2b705" stroke="#4a3000" stroke-width=".8"/><path d="M9.75 12.1h3.0" stroke="#fff3a8" stroke-width=".8"/><path d="M4.500 2.500q4.500-3.500 7 2.500" fill="none" stroke="#1f3f7a" stroke-width="1.100"/><path d="M9.500 5l2.200 1.800 1.800-2.800" fill="none" stroke="#1f3f7a" stroke-width="1.100"/></svg>
<svg style="left:1556px;top:109px;overflow:hidden" width="16" height="16" viewBox="0 0 16 16"><path d="M1.5 0.5h6l3 3v9h-9z" fill="#f4f4f4" stroke="#b8b8b8" stroke-width="1"/><path d="M7.5 0.5v3h3" fill="#cfe1f5" stroke="#b8b8b8" stroke-width=".8"/><path d="M3 4h5M3 6h5M3 8h4" stroke="#d0d0d0" stroke-width=".8"/><path d="M4 15.500l2.500-6h8v6z" fill="#2f9a2f" stroke="#1c6a1c" stroke-width=".6"/><rect x="7.500" y="10.500" width="6" height="4.500" fill="#f4f0d8"/><ellipse cx="10.5" cy="14.0" rx="2.25" ry="1.350" fill="#f2b705" stroke="#4a3000" stroke-width=".8"/><path d="M9.25 13.7h2.0" stroke="#fff3a8" stroke-width=".8"/><ellipse cx="10.5" cy="11.9" rx="2.25" ry="1.350" fill="#f2b705" stroke="#4a3000" stroke-width=".8"/><path d="M9.25 11.6h2.0" stroke="#fff3a8" stroke-width=".8"/></svg>
<svg style="left:1579px;top:109px;overflow:hidden" width="16" height="16" viewBox="0 0 16 16"><rect x="0" y="0" width="7.5" height="3.600" fill="#3a12e0"/><rect x="0.8" y="0" width="6.7" height=".9" fill="#4a8af0" opacity=".9"/><path d="M6.9 0h2.600v2.600l-2.600 1z" fill="#0a0a4a"/><rect x="1.1" y="1.7" width="1" height="1" fill="#ffe020"/><rect x="3.1" y="1.7" width="1" height="1" fill="#ffe020"/><rect x="5.1" y="1.7" width="1" height="1" fill="#ffe020"/><path d="M3 4.5l3.200 3.600" stroke="#2a7a00" stroke-width="1.500" stroke-dasharray="1 .7"/><path d="M9.8 4.3v6.500h-6.500l2.300-2 1.200-2.300 1.500-.600z" fill="#a6f500" stroke="#1c5a00" stroke-width=".9" stroke-linejoin="round"/><rect x="6.5" y="12.2" width="7.5" height="3.600" fill="#f09048"/><rect x="7.3" y="12.2" width="6.7" height=".9" fill="#4a8af0" opacity=".9"/><path d="M13.4 12.2h2.600v2.600l-2.600 1z" fill="#0a0a4a"/><rect x="7.6" y="13.899999999999999" width="1" height="1" fill="#fff"/><rect x="9.6" y="13.899999999999999" width="1" height="1" fill="#fff"/><rect x="11.6" y="13.899999999999999" width="1" height="1" fill="#fff"/></svg>
<svg style="left:1602px;top:109px;overflow:hidden" width="16" height="16" viewBox="0 0 16 16"><path d="M1.5 1.5h7l3 3v9h-10z" fill="#fff" stroke="#3a96d2" stroke-width="1"/><path d="M8.5 1.5v3h3" fill="#cfe1f5" stroke="#3a96d2" stroke-width=".8"/><rect x="3" y="5" width="5" height="1" fill="#35b6e6"/><rect x="3" y="7" width="5" height="1" fill="#35b6e6"/><path d="M5.500 5.500q5.500-3 7 3" fill="none" stroke="#14305a" stroke-width="1.100"/><path d="M10.300 7l2.200 2.200 1.800-2.700" fill="none" stroke="#14305a" stroke-width="1.100"/><ellipse cx="12.5" cy="14.6" rx="2.5" ry="1.350" fill="#f2b705" stroke="#4a3000" stroke-width=".8"/><path d="M11.0 14.299999999999999h2.5" stroke="#fff3a8" stroke-width=".8"/><ellipse cx="12.5" cy="12.5" rx="2.5" ry="1.350" fill="#f2b705" stroke="#4a3000" stroke-width=".8"/><path d="M11.0 12.2h2.5" stroke="#fff3a8" stroke-width=".8"/><ellipse cx="12.5" cy="10.399999999999999" rx="2.5" ry="1.350" fill="#f2b705" stroke="#4a3000" stroke-width=".8"/><path d="M11.0 10.099999999999998h2.5" stroke="#fff3a8" stroke-width=".8"/></svg>
<svg style="left:1625px;top:109px;overflow:hidden" width="16" height="16" viewBox="0 0 16 16"><path d="M4.5 1.5h7l3 3v8h-10z" fill="#fff" stroke="#3a96d2" stroke-width="1"/><path d="M11.5 1.5v3h3" fill="#cfe1f5" stroke="#3a96d2" stroke-width=".8"/><rect x="7" y="5" width="5" height="1" fill="#35b6e6"/><rect x="7" y="7" width="5" height="1" fill="#35b6e6"/><ellipse cx="3.5" cy="6.0" rx="2.75" ry="1.350" fill="#f2b705" stroke="#4a3000" stroke-width=".8"/><path d="M1.75 5.7h3.0" stroke="#fff3a8" stroke-width=".8"/><ellipse cx="3.5" cy="3.9" rx="2.75" ry="1.350" fill="#f2b705" stroke="#4a3000" stroke-width=".8"/><path d="M1.75 3.6h3.0" stroke="#fff3a8" stroke-width=".8"/><ellipse cx="3.5" cy="1.7999999999999998" rx="2.75" ry="1.350" fill="#f2b705" stroke="#4a3000" stroke-width=".8"/><path d="M1.75 1.4999999999999998h3.0" stroke="#fff3a8" stroke-width=".8"/><path d="M2.500 9q2 5 7 3.500" fill="none" stroke="#1f3f7a" stroke-width="1.100"/><path d="M1 10.500l1.500-2 2.200 1.500" fill="none" stroke="#1f3f7a" stroke-width="1.100"/></svg>
<svg style="left:1648px;top:109px;overflow:hidden" width="16" height="16" viewBox="0 0 16 16"><path d="M3 14.500l3-7h7.500v7z" fill="#d6d6d6" stroke="#aaa" stroke-width=".5"/><ellipse cx="10.5" cy="13.5" rx="2.75" ry="1.350" fill="#f2b705" stroke="#4a3000" stroke-width=".8"/><path d="M8.75 13.2h3.0" stroke="#fff3a8" stroke-width=".8"/><ellipse cx="10.5" cy="11.4" rx="2.75" ry="1.350" fill="#f2b705" stroke="#4a3000" stroke-width=".8"/><path d="M8.75 11.1h3.0" stroke="#fff3a8" stroke-width=".8"/><ellipse cx="10.5" cy="9.3" rx="2.75" ry="1.350" fill="#f2b705" stroke="#4a3000" stroke-width=".8"/><path d="M8.75 9.0h3.0" stroke="#fff3a8" stroke-width=".8"/><path d="M0.500 3h3v-3h2.500v3h3v2.500h-3v3h-2.500v-3h-3z" fill="#2fc22f" stroke="#1c8a1c" stroke-width=".5"/></svg>
<svg style="left:1671px;top:109px;overflow:hidden" width="16" height="16" viewBox="0 0 16 16"><path d="M3 14.500l3-7h7.500v7z" fill="#d6d6d6" stroke="#aaa" stroke-width=".5"/><ellipse cx="10.5" cy="13.5" rx="2.75" ry="1.350" fill="#f2b705" stroke="#4a3000" stroke-width=".8"/><path d="M8.75 13.2h3.0" stroke="#fff3a8" stroke-width=".8"/><ellipse cx="10.5" cy="11.4" rx="2.75" ry="1.350" fill="#f2b705" stroke="#4a3000" stroke-width=".8"/><path d="M8.75 11.1h3.0" stroke="#fff3a8" stroke-width=".8"/><ellipse cx="10.5" cy="9.3" rx="2.75" ry="1.350" fill="#f2b705" stroke="#4a3000" stroke-width=".8"/><path d="M8.75 9.0h3.0" stroke="#fff3a8" stroke-width=".8"/><rect x="0.500" y="3" width="8.500" height="2.500" fill="#2fc22f" stroke="#1c8a1c" stroke-width=".5"/></svg>
<div style="left:1723px;top:110px;width:3px;height:1px;background:#b5ad8a;"></div><div style="left:1723px;top:112px;width:3px;height:1px;background:#b5ad8a;"></div><div style="left:1723px;top:114px;width:3px;height:1px;background:#b5ad8a;"></div><div style="left:1723px;top:116px;width:3px;height:1px;background:#b5ad8a;"></div><div style="left:1723px;top:118px;width:3px;height:1px;background:#b5ad8a;"></div><div style="left:1723px;top:120px;width:3px;height:1px;background:#b5ad8a;"></div><div style="left:1723px;top:122px;width:3px;height:1px;background:#b5ad8a;"></div>
<svg style="left:1732px;top:109px;overflow:hidden" width="16" height="16" viewBox="0 0 16 16"><path d="M0.500 1.500h8l2.500 2.500v9h-10.500z" fill="#fff" stroke="#c8c8c8" stroke-width=".8"/><path d="M0.500 13.500h10.500" stroke="#666" stroke-width="1"/><text x="4.300" y="11.300" font-size="10.500" text-anchor="middle" fill="#111" font-family="Liberation Sans,sans-serif">Σ</text><path d="M6.9 11.5v-3.0l1.6-2.2l1.5 1.2l1.5-1.2l1.5 1.2l1.5-1.2l1.6 2.2v3.0z" fill="#2f5fd6" stroke="#0a1a9a" stroke-width=".6"/><path d="M10.3 6.1l1.2 1.6l1.2-1.6z" fill="#fff"/><circle cx="11.5" cy="3.8" r="2.0" fill="#f7c6a0"/><path d="M9.1 4.5v-1.2a2.4 2.2 0 0 1 4.8 0v1.2l-.8-.3v-1.2q-2.0 -1.500 -3.2 0v1.2z" fill="#6a0c0c"/><path d="M9 11.3l1.300-1.300h4.2v4.2l-1.300 1.300h-4.2z" fill="#b00000"/><path d="M9 11.3l1.300-1.300h4.2l-1.300 1.300z" fill="#ff5a4a"/><rect x="9" y="11.3" width="4.2" height="4.2" fill="#ff0a0a"/></svg>
<svg style="left:1755px;top:109px;overflow:hidden" width="16" height="16" viewBox="0 0 16 16"><path d="M0.500 1.500h8l2.500 2.500v9h-10.500z" fill="#fff" stroke="#c8c8c8" stroke-width=".8"/><path d="M0.500 13.500h10.500" stroke="#666" stroke-width="1"/><text x="4.300" y="11.300" font-size="10.500" text-anchor="middle" fill="#111" font-family="Liberation Sans,sans-serif">Σ</text><path d="M6.9 11.5v-3.0l1.6-2.2l1.5 1.2l1.5-1.2l1.5 1.2l1.5-1.2l1.6 2.2v3.0z" fill="#e3242b" stroke="#a00000" stroke-width=".6"/><path d="M10.3 6.1l1.2 1.6l1.2-1.6z" fill="#fff"/><circle cx="11.5" cy="3.8" r="2.0" fill="#f7c6a0"/><path d="M9.1 4.5v-1.2a2.4 2.2 0 0 1 4.8 0v1.2l-.8-.3v-1.2q-2.0 -1.500 -3.2 0v1.2z" fill="#6a0c0c"/><path d="M9 11.2l1.200-1.200h4.2v4.2l-1.200 1.200h-4.2z" fill="#1a3fd0" stroke="#0a1a7a" stroke-width=".5"/></svg>
<svg style="left:1778px;top:109px;overflow:hidden" width="16" height="16" viewBox="0 0 16 16"><path d="M0.500 1.500h8l2.500 2.500v9h-10.500z" fill="#fff" stroke="#c8c8c8" stroke-width=".8"/><path d="M0.500 13.500h10.500" stroke="#666" stroke-width="1"/><text x="4.300" y="11.300" font-size="10.500" text-anchor="middle" fill="#111" font-family="Liberation Sans,sans-serif">Σ</text><path d="M8.09 12.85v-2.55l1.36-1.87l1.275 1.02l1.275-1.02l1.275 1.02l1.275-1.02l1.36 1.87v2.55z" fill="#2f5fd6" stroke="#0a1a9a" stroke-width=".6"/><path d="M10.98 8.26l1.02 1.36l1.02-1.36z" fill="#fff"/><circle cx="12" cy="6.305" r="1.7" fill="#f7c6a0"/><path d="M9.9 6.9v-1.02a2.1 1.9 0 0 1 4.2 0v1.02l-.8-.3v-1.02q-1.7 -1.500 -2.5999999999999996 0v1.02z" fill="#6a0c0c"/><path d="M3.9000000000000004 17.0v-3.0l1.6-2.2l1.5 1.2l1.5-1.2l1.5 1.2l1.5-1.2l1.6 2.2v3.0z" fill="#e3242b" stroke="#a00000" stroke-width=".6"/><path d="M7.3 11.6l1.2 1.6l1.2-1.6z" fill="#fff"/><circle cx="8.5" cy="9.3" r="2.0" fill="#f7c6a0"/><path d="M6.1 10.0v-1.2a2.4 2.2 0 0 1 4.8 0v1.2l-.8-.3v-1.2q-2.0 -1.500 -3.2 0v1.2z" fill="#6a0c0c"/></svg>
<svg style="left:1801px;top:109px;overflow:hidden" width="16" height="16" viewBox="0 0 16 16"><path d="M0.500 1.500h8l2.500 2.500v9h-10.500z" fill="#fff" stroke="#c8c8c8" stroke-width=".8"/><path d="M0.500 13.500h10.500" stroke="#666" stroke-width="1"/><text x="4.300" y="11.300" font-size="10.500" text-anchor="middle" fill="#111" font-family="Liberation Sans,sans-serif">Σ</text><path d="M9.5 3.3l1.300-1.300h5v5l-1.300 1.300h-5z" fill="#b00000"/><path d="M9.5 3.3l1.300-1.300h5l-1.300 1.300z" fill="#ff5a4a"/><rect x="9.5" y="3.3" width="5" height="5" fill="#ff0a0a"/><rect x="6" y="13" width="8.5" height="3.600" fill="#2a2ab8"/><rect x="6.8" y="13" width="7.7" height=".9" fill="#4a8af0" opacity=".9"/><path d="M13.9 13h2.600v2.600l-2.600 1z" fill="#0a0a4a"/><rect x="7.1" y="14.7" width="1" height="1" fill="#ffe020"/><rect x="9.1" y="14.7" width="1" height="1" fill="#ffe020"/><rect x="11.1" y="14.7" width="1" height="1" fill="#ffe020"/></svg>
<svg style="left:1824px;top:109px;overflow:hidden" width="16" height="16" viewBox="0 0 16 16"><path d="M0.500 1.500h8l2.500 2.500v9h-10.500z" fill="#fff" stroke="#c8c8c8" stroke-width=".8"/><path d="M0.500 13.500h10.500" stroke="#666" stroke-width="1"/><text x="4.300" y="11.300" font-size="10.500" text-anchor="middle" fill="#111" font-family="Liberation Sans,sans-serif">Σ</text><path d="M9.5 1.8l1.300-1.300h5v5l-1.300 1.300h-5z" fill="#b00000"/><path d="M9.5 1.8l1.300-1.300h5l-1.300 1.300z" fill="#ff5a4a"/><rect x="9.5" y="1.8" width="5" height="5" fill="#ff0a0a"/><rect x="8.500" y="11.500" width="6" height="4" fill="#f09030" stroke="#7a3a0a" stroke-width=".6"/><rect x="10" y="13" width="3" height="2.500" fill="#7a2a0a"/></svg>
<svg style="left:1847px;top:109px;overflow:hidden" width="16" height="16" viewBox="0 0 16 16"><path d="M0.500 1.500h8l2.500 2.500v9h-10.500z" fill="#fff" stroke="#c8c8c8" stroke-width=".8"/><path d="M0.500 13.500h10.500" stroke="#666" stroke-width="1"/><text x="4.300" y="11.300" font-size="10.500" text-anchor="middle" fill="#111" font-family="Liberation Sans,sans-serif">Σ</text><path d="M9.5 5.3l1.300-1.300h5v5l-1.300 1.300h-5z" fill="#b00000"/><path d="M9.5 5.3l1.300-1.300h5l-1.300 1.300z" fill="#ff5a4a"/><rect x="9.5" y="5.3" width="5" height="5" fill="#ff0a0a"/><rect x="7" y="12.5" width="8" height="3.600" fill="#2f8af0"/><rect x="7.8" y="12.5" width="7.2" height=".9" fill="#4a8af0" opacity=".9"/><path d="M14.4 12.5h2.600v2.600l-2.600 1z" fill="#0a0a4a"/><rect x="8.1" y="14.2" width="1" height="1" fill="#ffe020"/><rect x="10.1" y="14.2" width="1" height="1" fill="#ffe020"/><rect x="12.1" y="14.2" width="1" height="1" fill="#ffe020"/></svg>
<svg style="left:1870px;top:109px;overflow:hidden" width="16" height="16" viewBox="0 0 16 16"><path d="M0.500 1.500h8l2.500 2.500v9h-10.500z" fill="#dcdcdc" stroke="#c8c8c8" stroke-width=".8"/><path d="M0.500 13.500h10.500" stroke="#666" stroke-width="1"/><text x="4.300" y="11.300" font-size="10.500" text-anchor="middle" fill="#111" font-family="Liberation Sans,sans-serif">Σ</text><rect x="8" y="5" width="6.500" height="9" fill="#d8d8d8" stroke="#666" stroke-width=".6"/><path d="M8.500 6.500h5.500M8.500 8h5.500M8.500 9.500h5.500M8.500 11h5.500M8.500 12.500h5.500" stroke="#555" stroke-width=".7"/><rect x="7" y="14" width="8.500" height="1.500" fill="#777"/></svg>
<div style="left:1893px;top:109px;width:4px;height:16px;overflow:hidden;"><svg style="left:0px;top:0px;overflow:hidden" width="16" height="16" viewBox="0 0 16 16"><path d="M0.500 1.500h8l2.500 2.500v9h-10.500z" fill="#fff" stroke="#c8c8c8" stroke-width=".8"/><path d="M0.500 13.500h10.500" stroke="#666" stroke-width="1"/><text x="4.300" y="11.300" font-size="10.500" text-anchor="middle" fill="#111" font-family="Liberation Sans,sans-serif">Σ</text><path d="M6.9 11.5v-3.0l1.6-2.2l1.5 1.2l1.5-1.2l1.5 1.2l1.5-1.2l1.6 2.2v3.0z" fill="#2f5fd6" stroke="#0a1a9a" stroke-width=".6"/><path d="M10.3 6.1l1.2 1.6l1.2-1.6z" fill="#fff"/><circle cx="11.5" cy="3.8" r="2.0" fill="#f7c6a0"/><path d="M9.1 4.5v-1.2a2.4 2.2 0 0 1 4.8 0v1.2l-.8-.3v-1.2q-2.0 -1.500 -3.2 0v1.2z" fill="#6a0c0c"/><path d="M9 11.3l1.300-1.300h4.2v4.2l-1.300 1.300h-4.2z" fill="#b00000"/><path d="M9 11.3l1.300-1.300h4.2l-1.300 1.300z" fill="#ff5a4a"/><rect x="9" y="11.3" width="4.2" height="4.2" fill="#ff0a0a"/></svg></div>
<svg style="left:1706px;top:109px" width="10" height="6" viewBox="0 0 10 6"><path d="M0.700 0.500l2.800 2.500-2.800 2.500M5.200 0.500l2.800 2.500-2.800 2.500" fill="none" stroke="#3a2a0a" stroke-width="1.700"/></svg>
<svg style="left:1707px;top:122px" width="7" height="4" viewBox="0 0 7 4"><path d="M0 0h7l-3.500 4z" fill="#4a3a16"/></svg>
<div style="left:8px;top:130px;width:1890px;height:2px;background:#8c8c8c;"></div>
<div style="left:10px;top:132px;width:1888px;height:1px;background:#fff;"></div>
<div style="left:10px;top:133px;width:1888px;height:17px;background:#cbcbcb;"></div>
<div style="left:10px;top:150px;width:1888px;height:1px;background:#6e6e6e;"></div>
<div style="left:8px;top:132px;width:1px;height:888px;background:#a0a0a0;"></div>
<div style="left:9px;top:132px;width:1px;height:888px;background:#707070;"></div>
<svg style="left:13px;top:133px;overflow:hidden" width="13" height="14" viewBox="0 0 16 16"><path d="M1.500 0.500h9l3 3v12h-12z" fill="#fff" stroke="#6a7a90"/><path d="M10.500 0.500v3h3" fill="#dde6f0" stroke="#6a7a90" stroke-width=".8"/><rect x="4" y="6" width="2" height="6" fill="#d22"/><rect x="7" y="8" width="2" height="4" fill="#e8a020"/><path d="M3 12.500h8" stroke="#444" stroke-width=".8"/></svg>
<div class="t" style="left:31px;top:134px;font-weight:bold;font-size:12px;line-height:14px;height:14px;color:#1a1a1a;">Отчет</div>
<div class="t" style="left:72px;top:134px;font-weight:bold;font-size:12px;line-height:14px;height:14px;color:#1a1a1a;letter-spacing:.05px;">Сводный отчет по планам продаж заказам менеджеров</div>
<div style="left:1872px;top:144px;width:8px;height:2px;background:#222;"></div>
<div style="left:1893px;top:135px;width:6px;height:4px;border-left:1px solid #222;border-top:2px solid #222;"></div>
<div style="left:1890px;top:138px;width:9px;height:8px;background:#cbcbcb;border:1px solid #222;border-top:2px solid #222;"></div>
<div style="left:10px;top:151px;width:1888px;height:24px;background:#ece5da;"></div>
<div style="left:10px;top:175px;width:1888px;height:1px;background:#c3bb98;"></div>
<div class="t" style="left:14px;top:157px;color:#1a1a1a;">Действия</div>
<svg style="left:68px;top:162px" width="5" height="3" viewBox="0 0 5 3"><path d="M0 0h5l-2.500 3z" fill="#222"/></svg>
<div style="left:78px;top:154px;width:1px;height:18px;background:#c9c2a6;"></div><div style="left:79px;top:154px;width:1px;height:18px;background:#f8f5ec;"></div>
<div style="left:129px;top:154px;width:1px;height:18px;background:#c9c2a6;"></div><div style="left:130px;top:154px;width:1px;height:18px;background:#f8f5ec;"></div>
<svg style="left:84px;top:155px;overflow:hidden" width="16" height="16" viewBox="0 0 16 16"><path d="M4.5 0.5h6.5l3 3v7h-9.5z" fill="#fdfdfd" stroke="#9aa6b6" stroke-width="1"/><path d="M11.0 0.5v3h3" fill="#cfe1f5" stroke="#9aa6b6" stroke-width=".8"/><path d="M6.500 3.500h5.500M6.500 5.500h5.500M6.500 7.500h5.500" stroke="#c3ccd8" stroke-width=".8"/><path d="M6.5 7.0l-1.500-1.500-3 3-1.500-1.500v5h5l-1.500-1.500z" fill="#2fa838" stroke="#1a6a22" stroke-width=".6" stroke-linejoin="round"/><path d="M7 15.0l4.5-4.500 4.5 4.500z" fill="#f6c93a" stroke="#c08a10" stroke-width=".6"/></svg>
<svg style="left:108px;top:155px;overflow:hidden" width="16" height="16" viewBox="0 0 16 16"><path d="M3.5 0.5h6.5l3 3v7h-9.5z" fill="#fdfdfd" stroke="#9aa6b6" stroke-width="1"/><path d="M10.0 0.5v3h3" fill="#cfe1f5" stroke="#9aa6b6" stroke-width=".8"/><path d="M5.500 3.500h5.500M5.500 5.500h5.500M5.500 7.500h5.500" stroke="#c3ccd8" stroke-width=".8"/><path d="M1 15.0l4.5-4.500 4.5 4.500z" fill="#f6c93a" stroke="#c08a10" stroke-width=".6"/><path d="M14.5 6.0l-1.500-1.500-3 3-1.500-1.500v5h5l-1.500-1.500z" fill="#2fa838" stroke="#1a6a22" stroke-width=".6" stroke-linejoin="round"/></svg>
<svg style="left:136px;top:155px;overflow:hidden" width="16" height="16" viewBox="0 0 16 16"><circle cx="8" cy="8" r="7.300" fill="#f0b63c" stroke="#b98a3a"/><circle cx="8" cy="8" r="5.800" fill="#f9dc8b"/><ellipse cx="8" cy="5" rx="4.500" ry="2.800" fill="#fff3cf" opacity=".8"/><text x="8" y="12" font-size="10.500" font-weight="bold" text-anchor="middle" fill="#8a5a1a" font-family="Liberation Sans,sans-serif">?</text></svg>
<svg style="left:163px;top:157px" width="8" height="12" viewBox="0 0 8 12"><path d="M0.500 0.500l7 5.500-7 5.500z" fill="#1f9a1f" stroke="#0f6a0f" stroke-width=".6"/></svg>
<div class="t" style="left:176px;top:157px;color:#1a1a1a;">Сформировать</div>
<div style="left:10px;top:176px;width:1888px;height:844px;background:#fffcf0;"></div>
<div style="left:18px;top:184px;width:950px;height:414px;background:#fff;border:1px solid #b5ac86;"></div>
<div style="left:19px;top:185px;width:21px;height:41px;background:#f3eed6;"></div>
<div style="left:41px;top:185px;width:462px;height:20px;background:#f3eed6;"></div>
<div style="left:504px;top:185px;width:463px;height:20px;background:#d6d1b9;"></div>
<div style="left:41px;top:206px;width:462px;height:20px;background:#f3eed6;"></div>
<div style="left:504px;top:206px;width:463px;height:20px;background:#f3eed6;"></div>
<div style="left:40px;top:185px;width:1px;height:402px;background:#b5ac86;"></div>
<div style="left:503px;top:185px;width:1px;height:41px;background:#b5ac86;"></div>
<div style="left:41px;top:205px;width:926px;height:1px;background:#b5ac86;"></div>
<div style="left:19px;top:226px;width:948px;height:1px;background:#b5ac86;"></div>
<div class="t" style="left:45px;top:189px;color:#2a2a2a;">Параметр</div>
<div class="t" style="left:508px;top:189px;color:#2a2a2a;">Значение</div>
<div class="t" style="left:45px;top:210px;color:#2a2a2a;">Дата начала</div>
<div class="t" style="left:508px;top:210px;color:#2a2a2a;">Дата окончания</div>
<div style="left:19px;top:264px;width:948px;height:1px;background:#b5ac86;"></div>
<div style="left:23px;top:230px;width:13px;height:13px;background:#fff;border:1px solid #b0a67e;"></div><svg style="left:26px;top:233px" width="8" height="8" viewBox="0 0 8 8"><path d="M0.300 2.800l2.300 2.700 4.200-5" fill="none" stroke="#000" stroke-width="2.200"/></svg>
<div style="left:504px;top:227px;width:463px;height:19px;background:#4d6bc6;"></div>
<div style="left:41px;top:245px;width:926px;height:1px;background:#b5ac86;"></div>
<div style="left:503px;top:227px;width:1px;height:37px;background:#b5ac86;"></div>
<div class="t" style="left:47px;top:231px;">Период анализа минимальной цены</div>
<div class="t" style="left:508px;top:231px;color:#fff;">Произвольный период</div>
<div class="t" style="left:45px;top:250px;">01.08.2018</div>
<div class="t" style="left:508px;top:250px;">31.12.2018</div>
<div style="left:19px;top:283px;width:948px;height:1px;background:#b5ac86;"></div>
<div style="left:23px;top:267px;width:13px;height:13px;background:#fff;border:1px solid #b0a67e;"></div><svg style="left:26px;top:270px" width="8" height="8" viewBox="0 0 8 8"><path d="M0.300 2.800l2.300 2.700 4.200-5" fill="none" stroke="#000" stroke-width="2.200"/></svg>
<div class="t" style="left:47px;top:268px;">Период</div>
<div class="t" style="left:508px;top:268px;">Произвольная дата</div>
<div class="t" style="left:740px;top:268px;">14.01.2020 0:00:00</div>
<div style="left:19px;top:302px;width:948px;height:1px;background:#b5ac86;"></div>
<div style="left:23px;top:286px;width:13px;height:13px;background:#fff;border:1px solid #b0a67e;"></div><svg style="left:26px;top:289px" width="8" height="8" viewBox="0 0 8 8"><path d="M0.300 2.800l2.300 2.700 4.200-5" fill="none" stroke="#000" stroke-width="2.200"/></svg>
<div class="t" style="left:47px;top:287px;">Тип исо</div>
<div style="left:19px;top:321px;width:948px;height:1px;background:#b5ac86;"></div>
<div style="left:23px;top:305px;width:13px;height:13px;background:#fff;border:1px solid #b0a67e;"></div><svg style="left:26px;top:308px" width="8" height="8" viewBox="0 0 8 8"><path d="M0.300 2.800l2.300 2.700 4.200-5" fill="none" stroke="#000" stroke-width="2.200"/></svg>
<div class="t" style="left:47px;top:306px;">Тип гост</div>
<div style="left:19px;top:340px;width:948px;height:1px;background:#b5ac86;"></div>
<div style="left:23px;top:324px;width:13px;height:13px;background:#fff;border:1px solid #b0a67e;"></div><svg style="left:26px;top:327px" width="8" height="8" viewBox="0 0 8 8"><path d="M0.300 2.800l2.300 2.700 4.200-5" fill="none" stroke="#000" stroke-width="2.200"/></svg>
<div class="t" style="left:47px;top:325px;">Валюта</div>
<div style="left:19px;top:359px;width:948px;height:1px;background:#b5ac86;"></div>
<div style="left:23px;top:343px;width:13px;height:13px;background:#fff;border:1px solid #b0a67e;"></div><svg style="left:26px;top:346px" width="8" height="8" viewBox="0 0 8 8"><path d="M0.300 2.800l2.300 2.700 4.200-5" fill="none" stroke="#000" stroke-width="2.200"/></svg>
<div class="t" style="left:47px;top:344px;">Тип конструктивная группа</div>
<div style="left:19px;top:378px;width:948px;height:1px;background:#b5ac86;"></div>
<div style="left:23px;top:362px;width:13px;height:13px;background:#fff;border:1px solid #b0a67e;"></div><svg style="left:26px;top:365px" width="8" height="8" viewBox="0 0 8 8"><path d="M0.300 2.800l2.300 2.700 4.200-5" fill="none" stroke="#000" stroke-width="2.200"/></svg>
<div class="t" style="left:47px;top:363px;">Дата потребностей по менеджерам</div>
<div class="t" style="left:508px;top:363px;">Произвольная дата</div>
<div class="t" style="left:740px;top:363px;">01.04.2019</div>
<div style="left:19px;top:397px;width:948px;height:1px;background:#b5ac86;"></div>
<div style="left:23px;top:381px;width:13px;height:13px;background:#fff;border:1px solid #b0a67e;"></div><svg style="left:26px;top:384px" width="8" height="8" viewBox="0 0 8 8"><path d="M0.300 2.800l2.300 2.700 4.200-5" fill="none" stroke="#000" stroke-width="2.200"/></svg>
<div class="t" style="left:47px;top:382px;">Количество месяцев</div>
<div style="left:19px;top:416px;width:948px;height:1px;background:#b5ac86;"></div>
<div style="left:23px;top:400px;width:13px;height:13px;background:#fff;border:1px solid #b0a67e;"></div><svg style="left:26px;top:403px" width="8" height="8" viewBox="0 0 8 8"><path d="M0.300 2.800l2.300 2.700 4.200-5" fill="none" stroke="#000" stroke-width="2.200"/></svg>
<div class="t" style="left:47px;top:401px;">Склад остатков</div>
<div class="t" style="left:508px;top:401px;">Основной; Транзитный склад</div>
<div style="left:19px;top:435px;width:948px;height:1px;background:#b5ac86;"></div>
<div style="left:23px;top:419px;width:13px;height:13px;background:#fff;border:1px solid #b0a67e;"></div><svg style="left:26px;top:422px" width="8" height="8" viewBox="0 0 8 8"><path d="M0.300 2.800l2.300 2.700 4.200-5" fill="none" stroke="#000" stroke-width="2.200"/></svg>
<div class="t" style="left:47px;top:420px;">Варинат планирования</div>
<div class="t" style="left:508px;top:420px;">По фактической потребности</div>
<div style="left:19px;top:454px;width:948px;height:1px;background:#b5ac86;"></div>
<div style="left:23px;top:438px;width:13px;height:13px;background:#fff;border:1px solid #b0a67e;"></div><svg style="left:26px;top:441px" width="8" height="8" viewBox="0 0 8 8"><path d="M0.300 2.800l2.300 2.700 4.200-5" fill="none" stroke="#000" stroke-width="2.200"/></svg>
<div class="t" style="left:47px;top:439px;">Не выводить постоянные потребности</div>
<div class="t" style="left:508px;top:439px;">Не выводить</div>
<div style="left:19px;top:473px;width:948px;height:1px;background:#b5ac86;"></div>
<div style="left:23px;top:457px;width:13px;height:13px;background:#fff;border:1px solid #b0a67e;"></div><svg style="left:26px;top:460px" width="8" height="8" viewBox="0 0 8 8"><path d="M0.300 2.800l2.300 2.700 4.200-5" fill="none" stroke="#000" stroke-width="2.200"/></svg>
<div class="t" style="left:47px;top:458px;">Только не обеспеченные</div>
<div class="t" style="left:508px;top:458px;">Только не обеспеченные</div>
<div style="left:19px;top:511px;width:948px;height:1px;background:#b5ac86;"></div>
<div style="left:23px;top:477px;width:13px;height:13px;background:#fff;border:1px solid #b0a67e;"></div><svg style="left:26px;top:480px" width="8" height="8" viewBox="0 0 8 8"><path d="M0.300 2.800l2.300 2.700 4.200-5" fill="none" stroke="#000" stroke-width="2.200"/></svg>
<div class="t" style="left:47px;top:478px;">Период потрбеностей</div>
<div class="t" style="left:508px;top:478px;">Произвольный период</div>
<div class="t" style="left:45px;top:497px;">01.12.2017</div>
<div class="t" style="left:508px;top:497px;">03.12.2018</div>
<div style="left:19px;top:530px;width:948px;height:1px;background:#b5ac86;"></div>
<div style="left:23px;top:514px;width:13px;height:13px;background:#fff;border:1px solid #b0a67e;"></div><svg style="left:26px;top:517px" width="8" height="8" viewBox="0 0 8 8"><path d="M0.300 2.800l2.300 2.700 4.200-5" fill="none" stroke="#000" stroke-width="2.200"/></svg>
<div class="t" style="left:47px;top:515px;">Тип цен "Минимальная"</div>
<div class="t" style="left:508px;top:515px;">Минимальная</div>
<div style="left:19px;top:549px;width:948px;height:1px;background:#b5ac86;"></div>
<div style="left:23px;top:533px;width:13px;height:13px;background:#fff;border:1px solid #b0a67e;"></div>
<div class="t" style="left:47px;top:534px;">Выводить подробные сведения о номенклатурной группе</div>
<div class="t" style="left:508px;top:534px;">Да</div>
<div style="left:19px;top:568px;width:948px;height:1px;background:#b5ac86;"></div>
<div style="left:23px;top:552px;width:13px;height:13px;background:#fff;border:1px solid #b0a67e;"></div>
<div class="t" style="left:47px;top:553px;">Выводить цены конкурентов</div>
<div class="t" style="left:508px;top:553px;">Да</div>
<div style="left:19px;top:587px;width:948px;height:1px;background:#b5ac86;"></div>
<div style="left:23px;top:571px;width:13px;height:13px;background:#fff;border:1px solid #b0a67e;"></div><svg style="left:26px;top:574px" width="8" height="8" viewBox="0 0 8 8"><path d="M0.300 2.800l2.300 2.700 4.200-5" fill="none" stroke="#000" stroke-width="2.200"/></svg>
<div class="t" style="left:47px;top:572px;">Дата начала поиска закупочной цены</div>
<div class="t" style="left:508px;top:572px;">Произвольная дата</div>
<div class="t" style="left:740px;top:572px;">01.03.2018</div>
<div class="t r" style="left:900px;top:382px;width:63px;">12</div>
<div style="left:973px;top:184px;width:931px;height:414px;background:#fff;border:1px solid #b5ac86;"></div>
<div style="left:974px;top:185px;width:21px;height:20px;background:#f3eed6;"></div>
<div style="left:996px;top:185px;width:906px;height:20px;background:#d6d1b9;"></div>
<div style="left:995px;top:185px;width:1px;height:58px;background:#b5ac86;"></div>
<div style="left:974px;top:205px;width:926px;height:1px;background:#b5ac86;"></div>
<div style="left:974px;top:224px;width:928px;height:1px;background:#b5ac86;"></div>
<div style="left:974px;top:243px;width:926px;height:1px;background:#b5ac86;"></div>
<div class="t" style="left:1000px;top:189px;color:#2a2a2a;">Представление</div>
<div style="left:1019px;top:206px;width:36px;height:18px;background:#4d6bc6;"></div>
<div class="t" style="left:1021px;top:209px;color:#fff;">Отбор</div>
<svg style="left:1005px;top:209px" width="9" height="9" viewBox="0 0 9 9"><circle cx="4.500" cy="4.500" r="3.800" fill="#fff" stroke="#8a8a8a" stroke-width=".9"/><path d="M2.500 4.500h4" stroke="#555" stroke-width="1"/></svg>
<div style="left:978px;top:227px;width:13px;height:13px;background:#fff;border:1px solid #b5ac86;"></div>
<div style="left:1041px;top:232px;width:10px;height:4px;background:linear-gradient(180deg,#9db7e8,#3f62b8);border-radius:1.500px;border:1px solid #4a5f9a;"></div>
<div class="t" style="left:1060px;top:229px;">Номенклатура номенклатурная группа</div>
<div class="t" style="left:1341px;top:229px;">В списке</div>
<div class="t" style="left:1586px;top:229px;letter-spacing:-.1px;">808106; 808214; 8101 (51101); 8102 (51102); 8103; 8104; 8105;</div>
<div style="left:0px;top:0px;width:1898px;height:1020px;overflow:hidden;background:none;"><div style="left:18px;top:602px;width:1880px;height:401px;background:#fff;border-top:1px solid #b9b08c;border-left:1px solid #b9b08c;"></div><div style="left:19px;top:603px;width:1878px;height:15px;background:linear-gradient(180deg,#fdfbf5,#f8f4e9);"></div><div style="left:19px;top:617px;width:1878px;height:1px;background:#b9b08c;"></div><div style="left:129px;top:603px;width:191px;height:14px;background:linear-gradient(180deg,#efece2,#e4e0d3);"></div><div style="left:53px;top:603px;width:1px;height:15px;background:#b9b08c;"></div><div style="left:54px;top:603px;width:1px;height:14px;background:#fff;"></div><div class="t c" style="left:54px;top:605px;width:74px;color:#45202c;">1</div><div style="left:128px;top:603px;width:1px;height:15px;background:#b9b08c;"></div><div style="left:129px;top:603px;width:1px;height:14px;background:#fff;"></div><div class="t c b" style="left:129px;top:605px;width:191px;color:#45202c;">2</div><div style="left:320px;top:603px;width:1px;height:15px;background:#b9b08c;"></div><div style="left:321px;top:603px;width:1px;height:14px;background:#fff;"></div><div class="t c" style="left:321px;top:605px;width:62px;color:#45202c;">3</div><div style="left:383px;top:603px;width:1px;height:15px;background:#b9b08c;"></div><div style="left:384px;top:603px;width:1px;height:14px;background:#fff;"></div><div class="t c" style="left:384px;top:605px;width:80px;color:#45202c;">4</div><div style="left:464px;top:603px;width:1px;height:15px;background:#b9b08c;"></div><div style="left:465px;top:603px;width:1px;height:14px;background:#fff;"></div><div class="t c" style="left:465px;top:605px;width:81px;color:#45202c;">5</div><div style="left:546px;top:603px;width:1px;height:15px;background:#b9b08c;"></div><div style="left:547px;top:603px;width:1px;height:14px;background:#fff;"></div><div class="t c" style="left:547px;top:605px;width:62px;color:#45202c;">6</div><div style="left:609px;top:603px;width:1px;height:15px;background:#b9b08c;"></div><div style="left:610px;top:603px;width:1px;height:14px;background:#fff;"></div><div class="t c" style="left:610px;top:605px;width:62px;color:#45202c;">9</div><div style="left:672px;top:603px;width:1px;height:15px;background:#b9b08c;"></div><div style="left:673px;top:603px;width:1px;height:14px;background:#fff;"></div><div class="t c" style="left:673px;top:605px;width:62px;color:#45202c;">10</div><div style="left:735px;top:603px;width:1px;height:15px;background:#b9b08c;"></div><div style="left:736px;top:603px;width:1px;height:14px;background:#fff;"></div><div class="t c" style="left:736px;top:605px;width:82px;color:#45202c;">11</div><div style="left:818px;top:603px;width:1px;height:15px;background:#b9b08c;"></div><div style="left:819px;top:603px;width:1px;height:14px;background:#fff;"></div><div class="t c" style="left:819px;top:605px;width:62px;color:#45202c;">12</div><div style="left:881px;top:603px;width:1px;height:15px;background:#b9b08c;"></div><div style="left:882px;top:603px;width:1px;height:14px;background:#fff;"></div><div class="t c" style="left:882px;top:605px;width:62px;color:#45202c;">13</div><div style="left:944px;top:603px;width:1px;height:15px;background:#b9b08c;"></div><div style="left:945px;top:603px;width:1px;height:14px;background:#fff;"></div><div class="t c" style="left:945px;top:605px;width:62px;color:#45202c;">14</div><div style="left:1007px;top:603px;width:1px;height:15px;background:#b9b08c;"></div><div style="left:1008px;top:603px;width:1px;height:14px;background:#fff;"></div><div class="t c" style="left:1008px;top:605px;width:62px;color:#45202c;">15</div><div style="left:1070px;top:603px;width:1px;height:15px;background:#b9b08c;"></div><div style="left:1071px;top:603px;width:1px;height:14px;background:#fff;"></div><div class="t c" style="left:1071px;top:605px;width:62px;color:#45202c;">16</div><div style="left:1133px;top:603px;width:1px;height:15px;background:#b9b08c;"></div><div style="left:1134px;top:603px;width:1px;height:14px;background:#fff;"></div><div class="t c" style="left:1134px;top:605px;width:62px;color:#45202c;">17</div><div style="left:1196px;top:603px;width:1px;height:15px;background:#b9b08c;"></div><div style="left:1197px;top:603px;width:1px;height:14px;background:#fff;"></div><div class="t c" style="left:1197px;top:605px;width:62px;color:#45202c;">18</div><div style="left:1259px;top:603px;width:1px;height:15px;background:#b9b08c;"></div><div style="left:1260px;top:603px;width:1px;height:14px;background:#fff;"></div><div class="t c" style="left:1260px;top:605px;width:62px;color:#45202c;">19</div><div style="left:1322px;top:603px;width:1px;height:15px;background:#b9b08c;"></div><div style="left:1323px;top:603px;width:1px;height:14px;background:#fff;"></div><div class="t c" style="left:1323px;top:605px;width:62px;color:#45202c;">20</div><div style="left:1385px;top:603px;width:1px;height:15px;background:#b9b08c;"></div><div style="left:1386px;top:603px;width:1px;height:14px;background:#fff;"></div><div class="t c" style="left:1386px;top:605px;width:62px;color:#45202c;">21</div><div style="left:1448px;top:603px;width:1px;height:15px;background:#b9b08c;"></div><div style="left:1449px;top:603px;width:1px;height:14px;background:#fff;"></div><div class="t c" style="left:1449px;top:605px;width:62px;color:#45202c;">22</div><div style="left:1511px;top:603px;width:1px;height:15px;background:#b9b08c;"></div><div style="left:1512px;top:603px;width:1px;height:14px;background:#fff;"></div><div class="t c" style="left:1512px;top:605px;width:62px;color:#45202c;">23</div><div style="left:1574px;top:603px;width:1px;height:15px;background:#b9b08c;"></div><div style="left:1575px;top:603px;width:1px;height:14px;background:#fff;"></div><div class="t c" style="left:1575px;top:605px;width:62px;color:#45202c;">24</div><div style="left:1637px;top:603px;width:1px;height:15px;background:#b9b08c;"></div><div style="left:1638px;top:603px;width:1px;height:14px;background:#fff;"></div><div class="t c" style="left:1638px;top:605px;width:62px;color:#45202c;">25</div><div style="left:1700px;top:603px;width:1px;height:15px;background:#b9b08c;"></div><div style="left:1701px;top:603px;width:1px;height:14px;background:#fff;"></div><div class="t c" style="left:1701px;top:605px;width:62px;color:#45202c;">26</div><div style="left:1763px;top:603px;width:1px;height:15px;background:#b9b08c;"></div><div style="left:1764px;top:603px;width:1px;height:14px;background:#fff;"></div><div class="t c" style="left:1764px;top:605px;width:62px;color:#45202c;">27</div><div style="left:1826px;top:603px;width:1px;height:15px;background:#b9b08c;"></div><div style="left:1827px;top:603px;width:1px;height:14px;background:#fff;"></div><div class="t c" style="left:1827px;top:605px;width:62px;color:#45202c;">28</div><div style="left:1889px;top:603px;width:1px;height:15px;background:#b9b08c;"></div><div style="left:1890px;top:603px;width:1px;height:14px;background:#fff;"></div><div style="left:19px;top:618px;width:34px;height:385px;background:#fcf9ee;"></div><div style="left:53px;top:618px;width:1px;height:385px;background:#b9b08c;"></div><div style="left:19px;top:603px;width:1px;height:400px;background:#d9d3ba;"></div><div style="left:19px;top:603px;width:1878px;height:1px;background:#d9d3ba;"></div><div style="left:19px;top:646px;width:34px;height:1px;background:#b9b08c;"></div><div style="left:19px;top:619px;width:34px;height:1px;background:#fff;"></div><div class="t c" style="left:19px;top:627px;width:34px;color:#45202c;letter-spacing:-.3px;">1</div><div style="left:19px;top:661px;width:34px;height:1px;background:#b9b08c;"></div><div style="left:19px;top:647px;width:34px;height:1px;background:#fff;"></div><div class="t c" style="left:19px;top:648px;width:34px;color:#45202c;letter-spacing:-.3px;">2</div><div style="left:19px;top:704px;width:34px;height:1px;background:#b9b08c;"></div><div style="left:19px;top:662px;width:34px;height:1px;background:#fff;"></div><div class="t c" style="left:19px;top:677px;width:34px;color:#45202c;letter-spacing:-.3px;">3</div><div style="left:19px;top:747px;width:34px;height:1px;background:#b9b08c;"></div><div style="left:19px;top:705px;width:34px;height:1px;background:#fff;"></div><div class="t c" style="left:19px;top:720px;width:34px;color:#45202c;letter-spacing:-.3px;">16091</div><div style="left:19px;top:762px;width:34px;height:1px;background:#b9b08c;"></div><div style="left:19px;top:748px;width:34px;height:1px;background:#fff;"></div><div class="t c" style="left:19px;top:749px;width:34px;color:#45202c;letter-spacing:-.3px;">16092</div><div style="left:19px;top:777px;width:34px;height:1px;background:#b9b08c;"></div><div style="left:19px;top:763px;width:34px;height:1px;background:#fff;"></div><div class="t c" style="left:19px;top:764px;width:34px;color:#45202c;letter-spacing:-.3px;">16093</div><div style="left:19px;top:792px;width:34px;height:1px;background:#b9b08c;"></div><div style="left:19px;top:778px;width:34px;height:1px;background:#fff;"></div><div class="t c" style="left:19px;top:779px;width:34px;color:#45202c;letter-spacing:-.3px;">16094</div><div style="left:19px;top:807px;width:34px;height:1px;background:#b9b08c;"></div><div style="left:19px;top:793px;width:34px;height:1px;background:#fff;"></div><div class="t c" style="left:19px;top:794px;width:34px;color:#45202c;letter-spacing:-.3px;">16095</div><div style="left:19px;top:822px;width:34px;height:1px;background:#b9b08c;"></div><div style="left:19px;top:808px;width:34px;height:1px;background:#fff;"></div><div class="t c" style="left:19px;top:809px;width:34px;color:#45202c;letter-spacing:-.3px;">16096</div><div style="left:19px;top:837px;width:34px;height:1px;background:#b9b08c;"></div><div style="left:19px;top:823px;width:34px;height:1px;background:#fff;"></div><div class="t c" style="left:19px;top:824px;width:34px;color:#45202c;letter-spacing:-.3px;">16097</div><div style="left:19px;top:852px;width:34px;height:1px;background:#b9b08c;"></div><div style="left:19px;top:838px;width:34px;height:1px;background:#fff;"></div><div class="t c" style="left:19px;top:839px;width:34px;color:#45202c;letter-spacing:-.3px;">16098</div><div style="left:19px;top:867px;width:34px;height:1px;background:#b9b08c;"></div><div style="left:19px;top:853px;width:34px;height:1px;background:#fff;"></div><div class="t c" style="left:19px;top:854px;width:34px;color:#45202c;letter-spacing:-.3px;">16099</div><div style="left:19px;top:882px;width:34px;height:1px;background:#b9b08c;"></div><div style="left:19px;top:868px;width:34px;height:1px;background:#fff;"></div><div class="t c" style="left:19px;top:869px;width:34px;color:#45202c;letter-spacing:-.3px;">16100</div><div style="left:19px;top:897px;width:34px;height:1px;background:#b9b08c;"></div><div style="left:19px;top:883px;width:34px;height:1px;background:#fff;"></div><div class="t c" style="left:19px;top:884px;width:34px;color:#45202c;letter-spacing:-.3px;">16101</div><div style="left:19px;top:912px;width:34px;height:1px;background:#b9b08c;"></div><div style="left:19px;top:898px;width:34px;height:1px;background:#fff;"></div><div class="t c" style="left:19px;top:899px;width:34px;color:#45202c;letter-spacing:-.3px;">16102</div><div style="left:19px;top:927px;width:34px;height:1px;background:#b9b08c;"></div><div style="left:19px;top:913px;width:34px;height:1px;background:#fff;"></div><div class="t c" style="left:19px;top:914px;width:34px;color:#45202c;letter-spacing:-.3px;">16103</div><div style="left:19px;top:942px;width:34px;height:1px;background:#b9b08c;"></div><div style="left:19px;top:928px;width:34px;height:1px;background:#fff;"></div><div class="t c" style="left:19px;top:929px;width:34px;color:#45202c;letter-spacing:-.3px;">16104</div><div style="left:19px;top:957px;width:34px;height:1px;background:#b9b08c;"></div><div style="left:19px;top:943px;width:34px;height:1px;background:#fff;"></div><div class="t c" style="left:19px;top:944px;width:34px;color:#45202c;letter-spacing:-.3px;">16105</div><div style="left:19px;top:972px;width:34px;height:1px;background:#b9b08c;"></div><div style="left:19px;top:958px;width:34px;height:1px;background:#fff;"></div><div class="t c" style="left:19px;top:959px;width:34px;color:#45202c;letter-spacing:-.3px;">16106</div><div style="left:19px;top:987px;width:34px;height:1px;background:#b9b08c;"></div><div style="left:19px;top:973px;width:34px;height:1px;background:#fff;"></div><div class="t c" style="left:19px;top:974px;width:34px;color:#45202c;letter-spacing:-.3px;">16107</div><div style="left:19px;top:1002px;width:34px;height:1px;background:#b9b08c;"></div><div style="left:19px;top:988px;width:34px;height:1px;background:#fff;"></div><div class="t c" style="left:19px;top:989px;width:34px;color:#45202c;letter-spacing:-.3px;">16108</div><div style="left:54px;top:618px;width:619px;height:86px;background:#7396ff;"></div><div style="left:673px;top:618px;width:145px;height:86px;background:#00c800;"></div><div style="left:819px;top:618px;width:503px;height:86px;background:#c4d69c;"></div><div style="left:1323px;top:618px;width:574px;height:86px;background:#ffc000;"></div><div style="left:54px;top:853px;width:1843px;height:14px;background:#c4d69c;"></div><div style="left:54px;top:661px;width:619px;height:1px;background:#000;"></div><div style="left:128px;top:661px;width:1px;height:43px;background:#000;"></div><div style="left:320px;top:661px;width:1px;height:43px;background:#000;"></div><div style="left:383px;top:661px;width:1px;height:43px;background:#000;"></div><div style="left:464px;top:661px;width:1px;height:43px;background:#000;"></div><div style="left:546px;top:661px;width:1px;height:43px;background:#000;"></div><div style="left:609px;top:661px;width:1px;height:43px;background:#000;"></div><div style="left:672px;top:618px;width:1px;height:86px;background:#000;"></div><div style="left:735px;top:618px;width:1px;height:86px;background:#b8c070;"></div><div style="left:818px;top:618px;width:1px;height:86px;background:#000;"></div><div style="left:881px;top:618px;width:1px;height:86px;background:#000;"></div><div style="left:881px;top:661px;width:315px;height:1px;background:#000;"></div><div style="left:944px;top:661px;width:1px;height:43px;background:#000;"></div><div style="left:1007px;top:661px;width:1px;height:43px;background:#000;"></div><div style="left:1070px;top:618px;width:1px;height:86px;background:#000;"></div><div style="left:1133px;top:661px;width:1px;height:43px;background:#000;"></div><div style="left:1196px;top:618px;width:1px;height:86px;background:#000;"></div><div style="left:1259px;top:618px;width:1px;height:86px;background:#000;"></div><div style="left:1322px;top:618px;width:1px;height:86px;background:#000;"></div><div style="left:1322px;top:646px;width:575px;height:1px;background:#000;"></div><div style="left:1385px;top:618px;width:1px;height:86px;background:#000;"></div><div style="left:1448px;top:618px;width:1px;height:86px;background:#000;"></div><div style="left:1511px;top:618px;width:1px;height:86px;background:#000;"></div><div style="left:1574px;top:618px;width:1px;height:86px;background:#000;"></div><div style="left:1637px;top:618px;width:1px;height:86px;background:#000;"></div><div style="left:1700px;top:618px;width:1px;height:86px;background:#000;"></div><div style="left:1763px;top:618px;width:1px;height:86px;background:#000;"></div><div style="left:1826px;top:618px;width:1px;height:86px;background:#000;"></div><div style="left:1889px;top:618px;width:1px;height:86px;background:#000;"></div><div style="left:54px;top:747px;width:1843px;height:1px;background:#000;"></div><div style="left:54px;top:762px;width:1843px;height:1px;background:#000;"></div><div style="left:54px;top:777px;width:1843px;height:1px;background:#000;"></div><div style="left:54px;top:792px;width:1843px;height:1px;background:#000;"></div><div style="left:54px;top:807px;width:1843px;height:1px;background:#000;"></div><div style="left:54px;top:822px;width:1843px;height:1px;background:#000;"></div><div style="left:54px;top:837px;width:1843px;height:1px;background:#000;"></div><div style="left:54px;top:852px;width:1843px;height:1px;background:#000;"></div><div style="left:54px;top:867px;width:1843px;height:1px;background:#000;"></div><div style="left:54px;top:882px;width:1843px;height:1px;background:#000;"></div><div style="left:54px;top:897px;width:1843px;height:1px;background:#000;"></div><div style="left:54px;top:912px;width:1843px;height:1px;background:#000;"></div><div style="left:54px;top:927px;width:1843px;height:1px;background:#000;"></div><div style="left:54px;top:942px;width:1843px;height:1px;background:#000;"></div><div style="left:54px;top:957px;width:1843px;height:1px;background:#000;"></div><div style="left:54px;top:972px;width:1843px;height:1px;background:#000;"></div><div style="left:54px;top:987px;width:1843px;height:1px;background:#000;"></div><div style="left:54px;top:1002px;width:1843px;height:1px;background:#000;"></div><div style="left:128px;top:748px;width:1px;height:105px;background:#000;"></div><div style="left:128px;top:868px;width:1px;height:135px;background:#000;"></div><div style="left:320px;top:705px;width:1px;height:298px;background:#000;"></div><div style="left:383px;top:705px;width:1px;height:298px;background:#000;"></div><div style="left:464px;top:705px;width:1px;height:298px;background:#000;"></div><div style="left:546px;top:705px;width:1px;height:298px;background:#000;"></div><div style="left:609px;top:705px;width:1px;height:298px;background:#000;"></div><div style="left:672px;top:705px;width:1px;height:298px;background:#000;"></div><div style="left:735px;top:705px;width:1px;height:298px;background:#c6bf9c;"></div><div style="left:818px;top:705px;width:1px;height:298px;background:#000;"></div><div style="left:881px;top:705px;width:1px;height:298px;background:#000;"></div><div style="left:944px;top:705px;width:1px;height:298px;background:#000;"></div><div style="left:1007px;top:705px;width:1px;height:298px;background:#000;"></div><div style="left:1070px;top:705px;width:1px;height:298px;background:#000;"></div><div style="left:1133px;top:705px;width:1px;height:298px;background:#000;"></div><div style="left:1196px;top:705px;width:1px;height:298px;background:#000;"></div><div style="left:1259px;top:705px;width:1px;height:298px;background:#000;"></div><div style="left:1322px;top:705px;width:1px;height:298px;background:#000;"></div><div style="left:1385px;top:705px;width:1px;height:298px;background:#000;"></div><div style="left:1448px;top:705px;width:1px;height:298px;background:#000;"></div><div style="left:1511px;top:705px;width:1px;height:298px;background:#000;"></div><div style="left:1574px;top:705px;width:1px;height:298px;background:#000;"></div><div style="left:1637px;top:705px;width:1px;height:298px;background:#000;"></div><div style="left:1700px;top:705px;width:1px;height:298px;background:#000;"></div><div style="left:1763px;top:705px;width:1px;height:298px;background:#000;"></div><div style="left:1826px;top:705px;width:1px;height:298px;background:#000;"></div><div style="left:1889px;top:705px;width:1px;height:298px;background:#000;"></div><div style="left:54px;top:704px;width:1843px;height:1px;background:#d2c9a4;"></div><div class="t c" style="left:54px;top:691px;width:74px;color:#0a0a1e;letter-spacing:-.15px;">Код 1С</div><div class="t c" style="left:129px;top:691px;width:191px;color:#0a0a1e;letter-spacing:-.15px;">Наименование по 1С</div><div class="t c" style="left:321px;top:691px;width:62px;color:#0a0a1e;letter-spacing:-.15px;">Вес, кг</div><div class="t c" style="left:384px;top:691px;width:80px;color:#0a0a1e;letter-spacing:-.15px;">Цена продажи</div><div class="t c" style="left:465px;top:691px;width:81px;color:#0a0a1e;letter-spacing:-.15px;">Цена закупки</div><div class="t c" style="left:547px;top:663px;width:62px;color:#0a0a1e;letter-spacing:-.15px;">Минималь</div><div class="t c" style="left:547px;top:677px;width:62px;color:#0a0a1e;letter-spacing:-.15px;">ная цена</div><div class="t c" style="left:547px;top:691px;width:62px;color:#0a0a1e;letter-spacing:-.15px;">продажи</div><div class="t c" style="left:610px;top:663px;width:62px;color:#0a0a1e;letter-spacing:-.15px;">Минималь</div><div class="t c" style="left:610px;top:677px;width:62px;color:#0a0a1e;letter-spacing:-.15px;">ная цена</div><div class="t c" style="left:610px;top:691px;width:62px;color:#0a0a1e;letter-spacing:-.15px;">по прайсу</div><div class="t c" style="left:673px;top:663px;width:62px;color:#0a0a1e;letter-spacing:-.15px;">Остатки</div><div class="t c" style="left:673px;top:677px;width:62px;color:#0a0a1e;letter-spacing:-.15px;">на</div><div class="t c" style="left:673px;top:691px;width:62px;color:#0a0a1e;letter-spacing:-.15px;">14.01.2020</div><div class="t c" style="left:736px;top:663px;width:82px;color:#0a0a1e;letter-spacing:-.15px;">Минимальная</div><div class="t c" style="left:736px;top:677px;width:82px;color:#0a0a1e;letter-spacing:-.15px;">цена закупки</div><div class="t c" style="left:736px;top:691px;width:82px;color:#0a0a1e;letter-spacing:-.15px;">руб/дол</div><div class="t c b" style="left:819px;top:619px;width:62px;">ISO</div><div class="t c b" style="left:882px;top:619px;width:188px;">Размеры</div><div class="t c b" style="left:1071px;top:619px;width:125px;">Допуск</div><div class="t c b" style="left:1197px;top:619px;width:62px;">Радиальн</div><div class="t c b" style="left:1197px;top:633px;width:62px;">ый зазор</div><div class="t c b" style="left:1260px;top:619px;width:62px;">Примечан</div><div class="t c b" style="left:1260px;top:633px;width:62px;">ие</div><div class="t c b" style="left:882px;top:691px;width:62px;">D</div><div class="t c b" style="left:945px;top:691px;width:62px;">d</div><div class="t c b" style="left:1008px;top:691px;width:62px;">H</div><div class="t c b" style="left:1071px;top:691px;width:62px;">D</div><div class="t c b" style="left:1134px;top:691px;width:62px;">d</div><div class="t c" style="left:1323px;top:633px;width:62px;color:#0a0a1e;">01/20</div><div class="t c" style="left:1323px;top:691px;width:62px;color:#0a0a1e;">приход</div><div class="t c" style="left:1386px;top:633px;width:62px;color:#0a0a1e;">02/20</div><div class="t c" style="left:1386px;top:691px;width:62px;color:#0a0a1e;">приход</div><div class="t c" style="left:1449px;top:633px;width:62px;color:#0a0a1e;">03/20</div><div class="t c" style="left:1449px;top:691px;width:62px;color:#0a0a1e;">приход</div><div class="t c" style="left:1512px;top:633px;width:62px;color:#0a0a1e;">04/20</div><div class="t c" style="left:1512px;top:691px;width:62px;color:#0a0a1e;">приход</div><div class="t c" style="left:1575px;top:633px;width:62px;color:#0a0a1e;">05/20</div><div class="t c" style="left:1575px;top:691px;width:62px;color:#0a0a1e;">приход</div><div class="t c" style="left:1638px;top:633px;width:62px;color:#0a0a1e;">06/20</div><div class="t c" style="left:1638px;top:691px;width:62px;color:#0a0a1e;">приход</div><div class="t c" style="left:1701px;top:633px;width:62px;color:#0a0a1e;">07/20</div><div class="t c" style="left:1701px;top:691px;width:62px;color:#0a0a1e;">приход</div><div class="t c" style="left:1764px;top:633px;width:62px;color:#0a0a1e;">08/20</div><div class="t c" style="left:1764px;top:691px;width:62px;color:#0a0a1e;">приход</div><div class="t c" style="left:1827px;top:633px;width:62px;color:#0a0a1e;">09/20</div><div class="t c" style="left:1827px;top:691px;width:62px;color:#0a0a1e;">приход</div><div class="t" style="left:56px;top:734px;letter-spacing:-.15px;">00000000633</div><div class="t" style="left:131px;top:706px;white-space:pre;">ШСЛ60К (GI60ES)  в этом</div><div class="t" style="left:131px;top:720px;white-space:pre;">количестве 900 шт подшипники</div><div class="t" style="left:131px;top:734px;white-space:pre;">WHX</div><div class="t r" style="left:303px;top:734px;width:78px;letter-spacing:-.12px;">0,94</div><div class="t r" style="left:592px;top:734px;width:78px;letter-spacing:-.12px;">325,00</div><div class="t" style="left:738px;top:734px;">114,87/</div><div class="t" style="left:56px;top:749px;letter-spacing:-.15px;">00000004676</div><div class="t" style="left:131px;top:749px;">ШСЛ60К (GI60ES) 39 кон</div><div class="t r" style="left:303px;top:749px;width:78px;letter-spacing:-.12px;">0,94</div><div class="t r" style="left:592px;top:749px;width:78px;letter-spacing:-.12px;">274,00</div><div class="t" style="left:738px;top:749px;">120,00/</div><div class="t" style="left:56px;top:764px;letter-spacing:-.15px;">00000005471</div><div class="t" style="left:131px;top:764px;">ШСЛ60К (GI60ES) 50 кон</div><div class="t r" style="left:303px;top:764px;width:78px;letter-spacing:-.12px;">0,942</div><div class="t r" style="left:592px;top:764px;width:78px;letter-spacing:-.12px;">312,00</div><div class="t" style="left:738px;top:764px;">/</div><div class="t" style="left:56px;top:779px;letter-spacing:-.15px;">00000002517</div><div class="t" style="left:131px;top:779px;">ШСЛ60К (GI60ES) светлый</div><div class="t r" style="left:303px;top:779px;width:78px;letter-spacing:-.12px;">0,94</div><div class="t r" style="left:592px;top:779px;width:78px;letter-spacing:-.12px;">274,00</div><div class="t" style="left:738px;top:779px;">121,65/</div><div class="t" style="left:56px;top:794px;letter-spacing:-.15px;">00000001217</div><div class="t" style="left:131px;top:794px;">ШСЛ60К (GI60ES) светлый</div><div class="t r" style="left:303px;top:794px;width:78px;letter-spacing:-.12px;">0,94</div><div class="t" style="left:738px;top:794px;">129,51/</div><div class="t" style="left:56px;top:809px;letter-spacing:-.15px;">00000004001</div><div class="t" style="left:131px;top:809px;">ШСЛ60К (GI60ES) светлый</div><div class="t r" style="left:303px;top:809px;width:78px;letter-spacing:-.12px;">1,03</div><div class="t r" style="left:592px;top:809px;width:78px;letter-spacing:-.12px;">274,00</div><div class="t" style="left:738px;top:809px;">/</div><div class="t" style="left:56px;top:824px;letter-spacing:-.15px;">00000002769</div><div class="t" style="left:131px;top:824px;">ШСЛ60К (GI60ES) светлый</div><div class="t r" style="left:303px;top:824px;width:78px;letter-spacing:-.12px;">0,94</div><div class="t" style="left:738px;top:824px;">119,51/</div><div class="t" style="left:56px;top:839px;letter-spacing:-.15px;">00000002405</div><div class="t" style="left:131px;top:839px;">ШСЛ60К (КПК)</div><div class="t" style="left:738px;top:839px;">/</div><div class="t r b" style="left:60px;top:854px;width:258px;">ШСЛ60К (GI60ES)</div><div class="t r b" style="left:303px;top:854px;width:78px;letter-spacing:-.12px;">1,1</div><div class="t r b" style="left:529px;top:854px;width:78px;letter-spacing:-.12px;">262,71</div><div class="t r b" style="left:592px;top:854px;width:78px;letter-spacing:-.12px;">274,00</div><div class="t r b" style="left:655px;top:854px;width:78px;letter-spacing:-.12px;">162</div><div class="t b" style="left:738px;top:854px;">1,00/</div><div class="t" style="left:56px;top:869px;letter-spacing:-.15px;">00000004201</div><div class="t" style="left:131px;top:869px;">ШСЛ70</div><div class="t r" style="left:303px;top:869px;width:78px;letter-spacing:-.12px;">1,56</div><div class="t" style="left:738px;top:869px;">/</div><div class="t" style="left:56px;top:884px;letter-spacing:-.15px;">00000001033</div><div class="t" style="left:131px;top:884px;">ШСЛ70</div><div class="t r" style="left:303px;top:884px;width:78px;letter-spacing:-.12px;">1,56</div><div class="t r" style="left:592px;top:884px;width:78px;letter-spacing:-.12px;">461,44</div><div class="t" style="left:738px;top:884px;">/</div><div class="t" style="left:56px;top:899px;letter-spacing:-.15px;">00000015696</div><div class="t" style="left:131px;top:899px;">ШСЛ70</div><div class="t r" style="left:655px;top:899px;width:78px;letter-spacing:-.12px;">7</div><div class="t" style="left:738px;top:899px;">/</div><div class="t" style="left:56px;top:914px;letter-spacing:-.15px;">00000013919</div><div class="t" style="left:131px;top:914px;">ШСЛ70К</div><div class="t r" style="left:303px;top:914px;width:78px;letter-spacing:-.12px;">1,56</div><div class="t r" style="left:592px;top:914px;width:78px;letter-spacing:-.12px;">624,00</div><div class="t" style="left:738px;top:914px;">/</div><div class="t" style="left:56px;top:929px;letter-spacing:-.15px;">00000006910</div><div class="t" style="left:131px;top:929px;">ШСЛ70К</div><div class="t r" style="left:303px;top:929px;width:78px;letter-spacing:-.12px;">1</div><div class="t r" style="left:592px;top:929px;width:78px;letter-spacing:-.12px;">487,00</div><div class="t" style="left:738px;top:929px;">/</div><div class="t" style="left:56px;top:944px;letter-spacing:-.15px;">00000012656</div><div class="t" style="left:131px;top:944px;">ШСЛ70К</div><div class="t r" style="left:303px;top:944px;width:78px;letter-spacing:-.12px;">1,56</div><div class="t r" style="left:592px;top:944px;width:78px;letter-spacing:-.12px;">504,00</div><div class="t" style="left:738px;top:944px;">/</div><div class="t" style="left:56px;top:959px;letter-spacing:-.15px;">00000012795</div><div class="t" style="left:131px;top:959px;">ШСЛ70К</div><div class="t r" style="left:303px;top:959px;width:78px;letter-spacing:-.12px;">1,56</div><div class="t r" style="left:592px;top:959px;width:78px;letter-spacing:-.12px;">528,00</div><div class="t" style="left:738px;top:959px;">/</div><div class="t" style="left:56px;top:974px;letter-spacing:-.15px;">00000013109</div><div class="t" style="left:131px;top:974px;">ШСЛ70К</div><div class="t r" style="left:303px;top:974px;width:78px;letter-spacing:-.12px;">3</div><div class="t r" style="left:592px;top:974px;width:78px;letter-spacing:-.12px;">615,00</div><div class="t r" style="left:655px;top:974px;width:78px;letter-spacing:-.12px;">10</div><div class="t" style="left:738px;top:974px;">/</div><div class="t" style="left:56px;top:989px;letter-spacing:-.15px;">00000012992</div><div class="t" style="left:131px;top:989px;">ШСЛ70К</div><div class="t r" style="left:303px;top:989px;width:78px;letter-spacing:-.12px;">1,56</div><div class="t r" style="left:592px;top:989px;width:78px;letter-spacing:-.12px;">564,00</div><div class="t" style="left:738px;top:989px;">/</div><div style="left:18px;top:1002px;width:1879px;height:17px;background:#fbf9ef;border-top:1px solid #b9b08c;border-bottom:1px solid #b9b08c;border-left:1px solid #b9b08c;"></div><div style="left:19px;top:1004px;width:21px;height:14px;background:#f4efd8;border-right:1px solid #b9b08c;"></div><div style="left:40px;top:1004px;width:452px;height:14px;background:linear-gradient(180deg,#f7f2dc,#efe9cf);border-right:1px solid #d9d2b4;"></div><div style="left:1880px;top:1004px;width:17px;height:14px;background:#f4efd8;border-left:1px solid #b9b08c;"></div><svg style="left:24px;top:1006px" width="9" height="10" viewBox="0 0 9 10"><path d="M8 0.500v9l-7.500-4.500z" fill="#d6d2c0" stroke="#c4bfa8" stroke-width=".5"/></svg><svg style="left:1885px;top:1006px" width="9" height="10" viewBox="0 0 9 10"><path d="M1 0.500v9l7.500-4.500z" fill="#8a8a8a"/></svg><div style="left:263px;top:1008px;width:3px;height:3px;border-radius:50%;border:1px solid #cfc9ad;"></div></div>
<div style="left:1897px;top:32px;width:17px;height:988px;background:#f0f0f0;"></div>
<div style="left:1898px;top:50px;width:15px;height:871px;background:linear-gradient(90deg,#f5f5f5 0%,#ececec 45%,#d7d7da 50%,#c9c9cd 100%);border:1px solid #959595;border-radius:2px;box-shadow:inset 0 0 0 1px rgba(255,255,255,.7);"></div>
<div style="left:1902px;top:481px;width:7px;height:1px;background:#4a4a4a;"></div>
<div style="left:1902px;top:482px;width:7px;height:1px;background:#fff;"></div>
<div style="left:1902px;top:484px;width:7px;height:1px;background:#4a4a4a;"></div>
<div style="left:1902px;top:485px;width:7px;height:1px;background:#fff;"></div>
<div style="left:1902px;top:487px;width:7px;height:1px;background:#4a4a4a;"></div>
<div style="left:1902px;top:488px;width:7px;height:1px;background:#fff;"></div>
<svg style="left:1902px;top:38px" width="8" height="5" viewBox="0 0 8 5"><path d="M0 5l4-4.500 4 4.500z" fill="#5a5a5a"/></svg>
<svg style="left:1902px;top:1010px" width="8" height="5" viewBox="0 0 8 5"><path d="M0 0l4 4.500 4-4.500z" fill="#5a5a5a"/></svg>
<div style="left:8px;top:1020px;width:1906px;height:17px;background:#f0f0f0;"></div>
<div style="left:27px;top:1021px;width:1821px;height:15px;background:linear-gradient(180deg,#f5f5f5 0%,#ececec 45%,#d7d7da 50%,#c9c9cd 100%);border:1px solid #959595;border-radius:2px;box-shadow:inset 0 0 0 1px rgba(255,255,255,.7);"></div>
<div style="left:933px;top:1025px;width:1px;height:7px;background:#4a4a4a;"></div>
<div style="left:934px;top:1025px;width:1px;height:7px;background:#fff;"></div>
<div style="left:936px;top:1025px;width:1px;height:7px;background:#4a4a4a;"></div>
<div style="left:937px;top:1025px;width:1px;height:7px;background:#fff;"></div>
<div style="left:939px;top:1025px;width:1px;height:7px;background:#4a4a4a;"></div>
<div style="left:940px;top:1025px;width:1px;height:7px;background:#fff;"></div>
<svg style="left:14px;top:1024px" width="5" height="8" viewBox="0 0 5 8"><path d="M5 0l-4.500 4 4.500 4z" fill="#222"/></svg>
<svg style="left:1887px;top:1024px" width="5" height="8" viewBox="0 0 5 8"><path d="M0 0l4.500 4-4.500 4z" fill="#222"/></svg>
<div style="left:1910px;top:1024px;width:2px;height:2px;background:#b8b8b8;"></div>
<div style="left:1910px;top:1028px;width:2px;height:2px;background:#b8b8b8;"></div>
<div style="left:1910px;top:1032px;width:2px;height:2px;background:#b8b8b8;"></div>
<div style="left:1906px;top:1028px;width:2px;height:2px;background:#b8b8b8;"></div>
<div style="left:1906px;top:1032px;width:2px;height:2px;background:#b8b8b8;"></div>
<div style="left:1902px;top:1032px;width:2px;height:2px;background:#b8b8b8;"></div>
<div style="left:0px;top:1044px;width:1920px;height:7px;background:linear-gradient(180deg,#d2d3d6,#bdbfc3 50%,#858a92);z-index:-1;"></div>
<div style="left:105px;top:1044px;width:1px;height:7px;background:#8a8a8a;z-index:-1;"></div>
<div style="left:200px;top:1044px;width:1px;height:7px;background:#8a8a8a;z-index:-1;"></div>
<div style="left:293px;top:1044px;width:1px;height:7px;background:#8a8a8a;z-index:-1;"></div>
<div style="left:0px;top:1050px;width:1920px;height:30px;background:linear-gradient(90deg,#8a9cb4 0px,#8c9fb7 68px,#b7cbe4 78px,#b8cde6 800px,#bbcfe7 1000px,#b5cae3 1400px,#abc0d9 1480px,#8fa3bd 1540px,#8da1bb 1920px);border-top:1px solid #5f6f85;box-shadow:inset 0 1px 0 rgba(255,255,255,.35);"></div>
<div style="left:640px;top:1052px;width:860px;height:28px;background:linear-gradient(115deg,rgba(255,255,255,0) 0%,rgba(255,255,255,0) 20%,rgba(255,255,255,.18) 24%,rgba(255,255,255,0) 30%,rgba(255,255,255,0) 55%,rgba(255,255,255,.2) 60%,rgba(255,255,255,0) 68%,rgba(150,170,195,.25) 72%,rgba(255,255,255,0) 78%);"></div>
<div style="left:1647px;top:1044px;width:19px;height:4px;background:#e8d27a;border:1px solid #b89a3a;border-top:none;border-radius:0 0 4px 4px;z-index:-1;"></div>
<svg style="left:6px;top:1043px" width="42" height="37" viewBox="0 0 42 37"><defs><radialGradient id="orb" cx="50%" cy="40%" r="62%"><stop offset="0" stop-color="#5fb4e8"/><stop offset=".6" stop-color="#1f62ae"/><stop offset="1" stop-color="#0c2f6e"/></radialGradient><radialGradient id="orbg" cx="50%" cy="100%" r="55%"><stop offset="0" stop-color="#22e0ff"/><stop offset="1" stop-color="#22e0ff" stop-opacity="0"/></radialGradient></defs><circle cx="21" cy="20.500" r="18.300" fill="url(#orb)" stroke="#163a6e" stroke-width="1.200"/><circle cx="21" cy="20.500" r="17.500" fill="url(#orbg)"/><path d="M5 16a16.500 16.500 0 0 1 32 0q-16 7-32 0z" fill="#fff" opacity=".28"/><g transform="translate(21 20.500) scale(1.250) translate(-19.500 -19.800)"><path d="M12 13q4-2.500 8-1l-1.800 7q-4-1.500-8 .8z" fill="#f0552a"/><path d="M22 12.500q4 1.500 8-.8l-1.800 7q-4 2.300-8 .8z" fill="#8cc63e"/><path d="M9.700 21.500q4-2.300 8-.8l-1.800 7q-4-1.500-8 .8z" fill="#2f9fe6"/><path d="M19.700 21.300q4 1.500 8-.8l-1.800 7q-4 2.300-8 .8z" fill="#f9c629"/></g></svg>
<div style="left:58px;top:1055px;width:2px;height:2px;background:#3f5068;"></div>
<div style="left:61px;top:1055px;width:2px;height:2px;background:#3f5068;"></div>
<div style="left:64px;top:1055px;width:2px;height:2px;background:#3f5068;"></div>
<div style="left:58px;top:1059px;width:2px;height:2px;background:#3f5068;"></div>
<div style="left:61px;top:1059px;width:2px;height:2px;background:#3f5068;"></div>
<div style="left:64px;top:1059px;width:2px;height:2px;background:#3f5068;"></div>
<div style="left:58px;top:1063px;width:2px;height:2px;background:#3f5068;"></div>
<div style="left:61px;top:1063px;width:2px;height:2px;background:#3f5068;"></div>
<div style="left:64px;top:1063px;width:2px;height:2px;background:#3f5068;"></div>
<div style="left:58px;top:1067px;width:2px;height:2px;background:#3f5068;"></div>
<div style="left:61px;top:1067px;width:2px;height:2px;background:#3f5068;"></div>
<div style="left:64px;top:1067px;width:2px;height:2px;background:#3f5068;"></div>
<div style="left:58px;top:1071px;width:2px;height:2px;background:#3f5068;"></div>
<div style="left:61px;top:1071px;width:2px;height:2px;background:#3f5068;"></div>
<div style="left:64px;top:1071px;width:2px;height:2px;background:#3f5068;"></div>
<div style="left:58px;top:1075px;width:2px;height:2px;background:#3f5068;"></div>
<div style="left:61px;top:1075px;width:2px;height:2px;background:#3f5068;"></div>
<div style="left:64px;top:1075px;width:2px;height:2px;background:#3f5068;"></div>
<div style="left:113px;top:1051px;width:5px;height:29px;background:linear-gradient(180deg,#c3d3e7,#a9bfd9);border:1px solid #46566e;border-left:none;border-radius:0 3px 3px 0;box-shadow:inset -1px 0 0 rgba(255,255,255,.6);"></div><div style="left:110px;top:1051px;width:5px;height:29px;background:linear-gradient(180deg,#c3d3e7,#a9bfd9);border:1px solid #46566e;border-left:none;border-radius:0 3px 3px 0;box-shadow:inset -1px 0 0 rgba(255,255,255,.6);"></div><div style="left:75px;top:1051px;width:35px;height:29px;background:linear-gradient(180deg,#cbd9ea 0%,#b6c9e0 48%,#a7bdd8 52%,#b5c8df 100%);border:1px solid #46566e;border-radius:3px;box-shadow:inset 0 0 0 1px rgba(255,255,255,.6);"></div>
<div style="left:160px;top:1051px;width:5px;height:29px;background:linear-gradient(180deg,#c3d3e7,#a9bfd9);border:1px solid #46566e;border-left:none;border-radius:0 3px 3px 0;box-shadow:inset -1px 0 0 rgba(255,255,255,.6);"></div><div style="left:157px;top:1051px;width:5px;height:29px;background:linear-gradient(180deg,#c3d3e7,#a9bfd9);border:1px solid #46566e;border-left:none;border-radius:0 3px 3px 0;box-shadow:inset -1px 0 0 rgba(255,255,255,.6);"></div><div style="left:121px;top:1051px;width:36px;height:29px;background:linear-gradient(180deg,#cbd9ea 0%,#b6c9e0 48%,#a7bdd8 52%,#b5c8df 100%);border:1px solid #46566e;border-radius:3px;box-shadow:inset 0 0 0 1px rgba(255,255,255,.6);"></div>
<div style="left:167px;top:1051px;width:43px;height:29px;background:linear-gradient(180deg,#cbd9ea 0%,#b6c9e0 48%,#a7bdd8 52%,#b5c8df 100%);border:1px solid #46566e;border-radius:3px;box-shadow:inset 0 0 0 1px rgba(255,255,255,.6);"></div>
<div style="left:252px;top:1051px;width:5px;height:29px;background:linear-gradient(180deg,#c3d3e7,#a9bfd9);border:1px solid #46566e;border-left:none;border-radius:0 3px 3px 0;box-shadow:inset -1px 0 0 rgba(255,255,255,.6);"></div><div style="left:213px;top:1051px;width:39px;height:29px;background:linear-gradient(180deg,#cbd9ea 0%,#b6c9e0 48%,#a7bdd8 52%,#b5c8df 100%);border:1px solid #46566e;border-radius:3px;box-shadow:inset 0 0 0 1px rgba(255,255,255,.6);"></div>
<div style="left:257px;top:1052px;width:46px;height:28px;background:linear-gradient(180deg,#b9cce4,#b0c5df);"></div>
<div style="left:305px;top:1051px;width:43px;height:29px;background:linear-gradient(180deg,#cbd9ea 0%,#b6c9e0 48%,#a7bdd8 52%,#b5c8df 100%);border:1px solid #46566e;border-radius:3px;box-shadow:inset 0 0 0 1px rgba(255,255,255,.6);"></div>
<div style="left:351px;top:1051px;width:43px;height:29px;background:linear-gradient(180deg,#cbd9ea 0%,#b6c9e0 48%,#a7bdd8 52%,#b5c8df 100%);border:1px solid #46566e;border-radius:3px;box-shadow:inset 0 0 0 1px rgba(255,255,255,.6);"></div>
<div style="left:397px;top:1051px;width:43px;height:29px;background:linear-gradient(180deg,#cbd9ea 0%,#b6c9e0 48%,#a7bdd8 52%,#b5c8df 100%);border:1px solid #46566e;border-radius:3px;box-shadow:inset 0 0 0 1px rgba(255,255,255,.6);"></div>
<div style="left:443px;top:1051px;width:44px;height:29px;background:linear-gradient(180deg,#cbd9ea 0%,#b6c9e0 48%,#a7bdd8 52%,#b5c8df 100%);border:1px solid #46566e;border-radius:3px;box-shadow:inset 0 0 0 1px rgba(255,255,255,.6);"></div>
<div style="left:528px;top:1051px;width:5px;height:29px;background:linear-gradient(180deg,#c3d3e7,#a9bfd9);border:1px solid #46566e;border-left:none;border-radius:0 3px 3px 0;box-shadow:inset -1px 0 0 rgba(255,255,255,.6);"></div><div style="left:489px;top:1051px;width:39px;height:29px;background:linear-gradient(180deg,#cbd9ea 0%,#b6c9e0 48%,#a7bdd8 52%,#b5c8df 100%);border:1px solid #46566e;border-radius:3px;box-shadow:inset 0 0 0 1px rgba(255,255,255,.6);"></div>
<div style="left:535px;top:1051px;width:44px;height:29px;background:linear-gradient(180deg,#cbd9ea 0%,#b6c9e0 48%,#a7bdd8 52%,#b5c8df 100%);border:1px solid #46566e;border-radius:3px;box-shadow:inset 0 0 0 1px rgba(255,255,255,.6);"></div>
<div style="left:581px;top:1051px;width:44px;height:29px;background:linear-gradient(180deg,#cbd9ea 0%,#b6c9e0 48%,#a7bdd8 52%,#b5c8df 100%);border:1px solid #46566e;border-radius:3px;box-shadow:inset 0 0 0 1px rgba(255,255,255,.6);"></div>
<svg style="left:85px;top:1058px" width="16" height="16" viewBox="0 0 16 16"><path d="M1 3.500h5l1 1.500h8v9.500h-14z" fill="#f2d36b" stroke="#c9a030" stroke-width=".7"/><path d="M1 6.500h14v8h-14z" fill="#f8e08a"/><path d="M2.500 15v-5q0-1.500 1.500-1.500h8q1.500 0 1.500 1.500v5h-2.500v-3h-6v3z" fill="#3d9be9" stroke="#1f6fc0" stroke-width=".6"/><rect x="2" y="2" width="3" height="1.500" fill="#7bc043"/></svg>
<svg style="left:131px;top:1058px" width="16" height="16" viewBox="0 0 16 16"><rect x="1" y="1" width="14" height="14" fill="#eaf4e6" stroke="#1f7a3a" stroke-width="1.200"/><text x="8" y="13.500" font-size="14" font-weight="bold" text-anchor="middle" fill="#1f7a3a" font-family="Liberation Sans,sans-serif">X</text></svg>
<svg style="left:181px;top:1058px" width="16" height="16" viewBox="0 0 16 16"><circle cx="8" cy="8" r="7.500" fill="#fff"/><path d="M8 8L1.500 4.200A7.500 7.500 0 0 1 14.500 4.200z" fill="#ea4335"/><path d="M8 8L14.500 4.200A7.500 7.500 0 0 1 8 15.500z" fill="#fbbc05"/><path d="M8 8L8 15.500A7.500 7.500 0 0 1 1.500 4.200z" fill="#34a853"/><circle cx="8" cy="8" r="3.400" fill="#fff"/><circle cx="8" cy="8" r="2.600" fill="#4285f4"/></svg>
<svg style="left:224px;top:1058px" width="16" height="16" viewBox="0 0 16 16"><rect x="1" y="1" width="14" height="14" fill="#fff" stroke="#1f4fb0" stroke-width="1.200"/><text x="8" y="13" font-size="13" font-weight="bold" text-anchor="middle" fill="#1f4fb0" font-family="Liberation Serif,serif">W</text></svg>
<svg style="left:273px;top:1058px" width="16" height="16" viewBox="0 0 16 16"><path d="M0.500 2h10.500l4.500 6-4.500 6h-10.500z" fill="#fbfbfb" stroke="#c8c8c8" stroke-width=".6"/><text x="6" y="12.500" font-size="12" font-weight="bold" text-anchor="middle" fill="#e01a1a" font-family="Liberation Sans,sans-serif">Я</text></svg>
<svg style="left:319px;top:1058px" width="16" height="16" viewBox="0 0 16 16"><rect x="0.500" y="0.500" width="15" height="15" fill="#f8b21a" stroke="#c97f08" stroke-width="1"/><rect x="1.800" y="1.800" width="12.400" height="12.400" fill="none" stroke="#fde49a" stroke-width="1"/><ellipse cx="8" cy="8" rx="3.300" ry="4.300" fill="none" stroke="#8a4a00" stroke-width="3.200"/><ellipse cx="8" cy="8" rx="3.300" ry="4.300" fill="none" stroke="#fff" stroke-width="1.900"/></svg>
<svg style="left:365px;top:1058px" width="16" height="16" viewBox="0 0 16 16"><rect x="0.500" y="0.500" width="10" height="8" fill="#1f3fc0" stroke="#8a8a8a"/><rect x="3" y="9" width="5" height="2" fill="#aaa"/><circle cx="11" cy="11" r="4.300" fill="#e9eef2" stroke="#7b8794"/><path d="M9 9.500l1.800 1.500-1.800 1.500M13 9.500l-1.800 1.500 1.800 1.500" stroke="#1f9a2e" stroke-width="1.200" fill="none"/></svg>
<svg style="left:411px;top:1058px" width="16" height="16" viewBox="0 0 16 16"><circle cx="7.500" cy="7.500" r="5" fill="none" stroke="#333" stroke-width="3.600" stroke-dasharray="2.600 1.330"/><circle cx="7.500" cy="7.500" r="4" fill="#8a8a8a" stroke="#333" stroke-width="1"/><circle cx="7.500" cy="7.500" r="1.800" fill="#ddd"/><path d="M9 10h6v3q0 2-3 3-3-1-3-3z" fill="#f4c020" stroke="#2a5fc0" stroke-width=".8"/><path d="M12 10v6M9 12.500h6" stroke="#2a5fc0" stroke-width=".8"/></svg>
<svg style="left:457px;top:1058px" width="16" height="16" viewBox="0 0 16 16"><rect x="0" y="0" width="16" height="16" fill="#0e6fd8"/><circle cx="8" cy="8" r="6" fill="#fff"/><path d="M2.800 8l3.200-2.300v1.500h4v-1.500l3.200 2.300-3.200 2.300v-1.500h-4v1.500z" fill="#0e6fd8"/></svg>
<svg style="left:500px;top:1058px" width="16" height="16" viewBox="0 0 16 16"><path d="M3.500 2h10.500v12h-11.500z" fill="#a4dcee" stroke="#4f8ea6" stroke-width=".8"/><path d="M4.500 5h8.500M4.300 7h8.700M4.100 9h8.900M3.900 11h9.100" stroke="#5fb0cc" stroke-width=".8"/><path d="M4 1v2M5.800 1v2M7.600 1v2M9.400 1v2M11.200 1v2M13 1v2" stroke="#222" stroke-width=".9"/><path d="M2.500 14h11.500v1.300h-10.500z" fill="#ecdca0" stroke="#b8a860" stroke-width=".4"/></svg>
<svg style="left:549px;top:1058px" width="16" height="16" viewBox="0 0 16 16"><circle cx="8" cy="8" r="6.500" fill="#1fa7e8"/><circle cx="4.500" cy="4.500" r="3.500" fill="#1fa7e8"/><circle cx="11.500" cy="11.500" r="3.500" fill="#1fa7e8"/><text x="8" y="12" font-size="11" font-weight="bold" text-anchor="middle" fill="#fff" font-family="Liberation Sans,sans-serif">S</text></svg>
<svg style="left:595px;top:1058px" width="16" height="16" viewBox="0 0 16 16"><circle cx="8.500" cy="8" r="6" fill="#e8e8e8" stroke="#222" stroke-width="1.600" stroke-dasharray="2 1"/><text x="5" y="10" font-size="10" font-weight="bold" text-anchor="middle" fill="#1a2ac0" font-family="Liberation Sans,sans-serif">W</text><text x="11.500" y="14" font-size="9" font-weight="bold" text-anchor="middle" fill="#e01a1a" font-family="Liberation Sans,sans-serif">M</text></svg>
<div style="left:1542px;top:1055px;width:2px;height:2px;background:#46566e;"></div>
<div style="left:1545px;top:1055px;width:2px;height:2px;background:#46566e;"></div>
<div style="left:1548px;top:1055px;width:2px;height:2px;background:#46566e;"></div>
<div style="left:1542px;top:1059px;width:2px;height:2px;background:#46566e;"></div>
<div style="left:1545px;top:1059px;width:2px;height:2px;background:#46566e;"></div>
<div style="left:1548px;top:1059px;width:2px;height:2px;background:#46566e;"></div>
<div style="left:1542px;top:1063px;width:2px;height:2px;background:#46566e;"></div>
<div style="left:1545px;top:1063px;width:2px;height:2px;background:#46566e;"></div>
<div style="left:1548px;top:1063px;width:2px;height:2px;background:#46566e;"></div>
<div style="left:1542px;top:1067px;width:2px;height:2px;background:#46566e;"></div>
<div style="left:1545px;top:1067px;width:2px;height:2px;background:#46566e;"></div>
<div style="left:1548px;top:1067px;width:2px;height:2px;background:#46566e;"></div>
<div style="left:1542px;top:1071px;width:2px;height:2px;background:#46566e;"></div>
<div style="left:1545px;top:1071px;width:2px;height:2px;background:#46566e;"></div>
<div style="left:1548px;top:1071px;width:2px;height:2px;background:#46566e;"></div>
<div style="left:1542px;top:1075px;width:2px;height:2px;background:#46566e;"></div>
<div style="left:1545px;top:1075px;width:2px;height:2px;background:#46566e;"></div>
<div style="left:1548px;top:1075px;width:2px;height:2px;background:#46566e;"></div>
<div class="t" style="left:1559px;top:1057px;font-size:11.500px;color:#e3e7ec;line-height:14px;height:14px;letter-spacing:-.3px;">RU</div>
<svg style="left:1589px;top:1058px" width="16" height="16" viewBox="0 0 16 16"><path d="M0.800 12.500q0-6.500 7.500-8.500l5.500-.8q2 .3 1.300 2.300-2 5.500-9.300 7.500-3 .8-5-.5z" fill="#f6f6f6" stroke="#2a2a2a" stroke-width="1"/><path d="M3 11.500q2-3.500 8.500-5.500" stroke="#2a2a2a" stroke-width=".9" fill="none"/><path d="M5 12q3-.8 5.500-3" stroke="#888" stroke-width=".7" fill="none"/></svg>
<svg style="left:1614px;top:1058px" width="16" height="16" viewBox="0 0 16 16"><rect x="0" y="0" width="16" height="16" fill="#fff"/><rect x="1" y="1" width="14" height="4" fill="#e01a1a"/><path d="M1 3h14" stroke="#111" stroke-dasharray="1.500 1"/><rect x="1" y="6" width="5" height="9" fill="#a8a8a8" stroke="#333" stroke-width=".5"/><rect x="7" y="6" width="4" height="9" fill="#fff" stroke="#333" stroke-width=".5"/><rect x="11" y="7" width="4" height="5" fill="#f4e020"/><rect x="11" y="1" width="4" height="5" fill="#20c0f0"/><rect x="0" y="0" width="3" height="3" fill="#20c020"/></svg>
<svg style="left:1638px;top:1058px" width="16" height="16" viewBox="0 0 16 16"><path d="M0.500 15.500v-8l4-3h4l2-3h4.500l-2 4v10z" fill="#1fae3a" stroke="#0f7a22" stroke-width=".6"/><path d="M4 10.500l2.500 2.500 4.500-5" fill="none" stroke="#fff" stroke-width="1.800"/></svg>
<svg style="left:1662px;top:1058px" width="16" height="16" viewBox="0 0 16 16"><path d="M1 5.500h3l4-4v13l-4-4h-3z" fill="#f0f0f0" stroke="#555" stroke-width=".8"/><path d="M10 5q2 3 0 6M12 3.500q3 4.500 0 9" fill="none" stroke="#f0f0f0" stroke-width="1.200"/></svg>
<svg style="left:1686px;top:1058px" width="16" height="16" viewBox="0 0 16 16"><rect x="5.500" y="3.500" width="10" height="8" fill="#7a8a9a" stroke="#222" stroke-width="1"/><rect x="7" y="5" width="7" height="5" fill="#c8d4e0"/><rect x="8" y="12" width="5" height="2" fill="#333"/><rect x="6" y="14" width="9" height="1.500" fill="#ddd"/><path d="M2.500 1v4M4.500 1v4M1.500 5h4v3h-1v5h-2v-5h-1z" fill="#f4f4f4" stroke="#222" stroke-width=".7"/></svg>
<svg style="left:1710px;top:1058px" width="16" height="16" viewBox="0 0 16 16"><rect x="0" y="0" width="16" height="16" fill="#0e6fd8"/><circle cx="8" cy="8" r="6" fill="#fff"/><path d="M2.800 8l3.200-2.300v1.500h4v-1.500l3.200 2.300-3.200 2.300v-1.500h-4v1.500z" fill="#0e6fd8"/></svg>
<svg style="left:1734px;top:1058px" width="16" height="16" viewBox="0 0 16 16"><circle cx="8" cy="8" r="7.500" fill="#5aa81a"/><path d="M4.500 8l2.500 2.500 4.500-4.500" fill="none" stroke="#fff" stroke-width="1.800"/></svg>
<svg style="left:1758px;top:1058px" width="16" height="16" viewBox="0 0 16 16"><path d="M2.500 1v14" stroke="#f4f4f4" stroke-width="1.600"/><path d="M3.500 1.500q3-1.500 5 0t5 0v6.500q-3 1.500-5 0t-5 0z" fill="#f4f4f4" stroke="#777" stroke-width=".5"/><circle cx="11" cy="11.500" r="4.300" fill="#e0202a" stroke="#8a0a10" stroke-width=".5"/><path d="M9 9.500l4 4M13 9.500l-4 4" stroke="#fff" stroke-width="1.500"/></svg>
<svg style="left:1782px;top:1058px" width="16" height="16" viewBox="0 0 16 16"><rect x="0.500" y="0.500" width="15" height="15" fill="#f8b21a" stroke="#c97f08" stroke-width="1"/><rect x="1.800" y="1.800" width="12.400" height="12.400" fill="none" stroke="#fde49a" stroke-width="1"/><ellipse cx="8" cy="8" rx="3.300" ry="4.300" fill="none" stroke="#8a4a00" stroke-width="3.200"/><ellipse cx="8" cy="8" rx="3.300" ry="4.300" fill="none" stroke="#fff" stroke-width="1.900"/></svg>
<svg style="left:1806px;top:1058px" width="16" height="16" viewBox="0 0 16 16"><rect x="0.500" y="3" width="15" height="10" fill="#f8d86a" stroke="#c89a1a" stroke-width=".8"/><path d="M0.500 3l7.500 6 7.500-6" fill="#fbe9a0" stroke="#c89a1a" stroke-width=".8"/></svg>
<div class="t" style="left:1853px;top:1059px;font-size:12px;color:#fff;line-height:14px;height:14px;letter-spacing:-.5px;">14:47</div>
<div style="left:1906px;top:1051px;width:14px;height:29px;background:linear-gradient(90deg,#a9bcd4,#c3d2e4 40%,#a3b7d0);border-left:1px solid #5f7591;box-shadow:inset 1px 0 0 rgba(255,255,255,.5);"></div>
</body></html>
